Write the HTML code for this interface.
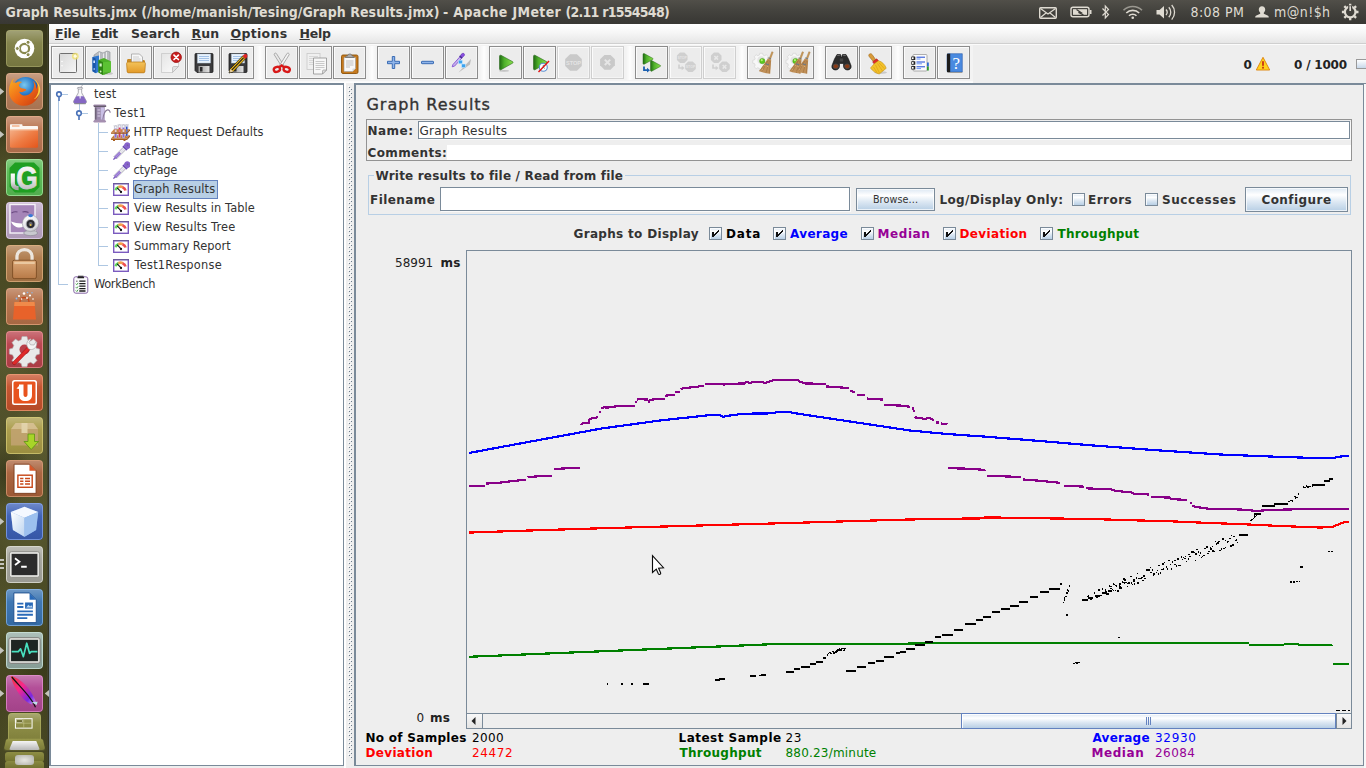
<!DOCTYPE html>
<html lang="en">
<head>
<meta charset="utf-8">
<title>Graph Results.jmx - Apache JMeter</title>
<style>
*{box-sizing:border-box;margin:0;padding:0}
html,body{width:1366px;height:768px;overflow:hidden;background:#eeeeee}
body{position:relative;font-family:"DejaVu Sans","Liberation Sans",sans-serif;font-size:12px;color:#333;line-height:14px}
.abs{position:absolute}
.t{position:absolute;white-space:nowrap;line-height:14px;height:14px}
.b{font-weight:bold;letter-spacing:.2px}
/* top panel */
#panel{position:absolute;left:0;top:0;width:1366px;height:24px;background:linear-gradient(#514f49,#45443f 40%,#3b3a36 85%,#393834)}
#title{position:absolute;left:5.5px;top:3px;font-family:"DejaVu Sans Condensed","DejaVu Sans","Liberation Sans",sans-serif;font-stretch:condensed;font-weight:bold;font-size:14px;line-height:18px;color:#dfdbd2;white-space:nowrap;letter-spacing:-.03px}
.pt{position:absolute;top:3px;font-family:"DejaVu Sans Condensed","DejaVu Sans","Liberation Sans",sans-serif;font-stretch:condensed;font-size:14px;line-height:18px;color:#dfdbd2;white-space:nowrap}
/* launcher */
#launcher{position:absolute;left:0;top:24px;width:49px;height:744px;background:#38381f;overflow:hidden}
.tile{position:absolute;left:6px;width:37px;height:37px;border-radius:4px;overflow:hidden}
/* app */
#menubar{position:absolute;left:49px;top:24px;width:1317px;height:20px;background:linear-gradient(#ffffff,#f6f6f6 45%,#e6e6e6);border-bottom:1px solid #cfcfcf}
.mi{position:absolute;top:3px;font-weight:bold;font-size:12.5px;line-height:15px;color:#333;white-space:nowrap}
.mu::first-letter{text-decoration:underline;text-underline-offset:1px}
#toolbar{position:absolute;left:49px;top:44px;width:1317px;height:39px;background:linear-gradient(#fbfbfb,#fbfbfb 1px,transparent 1px),linear-gradient(90deg,#f3f3f3 924px,#eeeeee 924px)}
.tb{position:absolute;top:46px;width:33px;height:33px;border:1px solid #8c8c8c;background:#ececec;box-shadow:inset 1px 1px 0 #fbfbfb,inset -1px -1px 0 #f4f4f4}
.tb svg{position:absolute;left:0;top:0}
/* tree */
#tree{position:absolute;left:49px;top:83px;width:295px;height:683px;border:2px solid #7a8a99;border-right-width:1px;border-bottom-width:1px;background:#fff}
.tr{position:absolute;white-space:nowrap;line-height:14px;height:14px;font-size:11.4px;color:#333}
/* right panel */
#right{position:absolute;left:354px;top:83px;width:1010px;height:683px;border:2px solid #7a8a99;border-right-width:1px;border-bottom-width:1px;background:#eeeeee}
input{font-family:inherit}
.cb{position:absolute;width:13px;height:13px;border:1px solid #7a8a99;background:linear-gradient(#dde8f3 0%,#ffffff 30%,#dde8f3 60%,#b8cfe5 100%);box-shadow:inset 1px 1px 0 rgba(255,255,255,.8)}
.cb svg{position:absolute;left:0;top:0}
.btn{border:1px solid #7a8a99;background:linear-gradient(#dde8f3 0%,#ffffff 30%,#dde8f3 60%,#b8cfe5 100%);display:flex;align-items:center;justify-content:center;color:#333;box-shadow:inset 0 0 0 1px rgba(255,255,255,.7)}
</style>
</head>
<body>
<div id="panel">
<div id="title"><span style="letter-spacing:.06px">Graph Results.jmx (/home/manish/Tesing/Graph Results.jmx) </span><span id="title1" style="position:absolute;left:437.5px;top:0;letter-spacing:.36px">- Apache JMeter </span><span id="title2" style="position:absolute;left:560px;top:0;letter-spacing:-.74px">(2.11 r1554548)</span></div>
<svg class="abs" style="left:1036px;top:2px" width="330" height="20" viewBox="1036 2 330 20" fill="none" stroke="#dfdbd2">
<rect x="1039.700" y="7.700" width="16.600" height="10.600" rx="1" stroke-width="1.400"/>
<path d="M1040.500 8.500l7.500 5.500 7.500-5.500M1040.500 17.500l5.500-4.500M1055.500 17.500l-5.500-4.500" stroke-width="1.200"/>
<rect x="1071" y="7.200" width="18" height="9.600" rx="2" stroke-width="1.400"/><rect x="1089.700" y="10" width="1.800" height="4" fill="#dfdbd2" stroke="none"/>
<rect x="1073" y="9.200" width="14" height="5.600" fill="#dfdbd2" stroke="none"/>
<path d="M1076.500 9.500l4.500 3h-2.500l5 2.500" stroke="#3c3b37" stroke-width="1.300"/>
<path d="M1102.500 8.500l6 6-3.200 3.500v-12l3.200 3.500-6 6" stroke-width="1.200"/>
<path d="M1123.500 10.300c5-5 13.500-5 18.500 0" stroke-width="1.600" opacity=".55"/>
<path d="M1126.300 13c3.500-3.500 9.400-3.500 12.900 0" stroke-width="1.600"/>
<path d="M1129 15.700c2-2 5.500-2 7.500 0" stroke-width="1.600"/>
<circle cx="1132.750" cy="17.700" r="1.300" fill="#dfdbd2" stroke="none"/>
<path d="M1156.500 10h3l4.500-4v12.500l-4.500-4h-3z" fill="#dfdbd2" stroke="none"/>
<path d="M1166 9.500c1.400 1.600 1.400 4 0 5.600" stroke-width="1.300"/><path d="M1168.800 7.300c2.600 2.800 2.600 7.200 0 10" stroke-width="1.300"/><path d="M1171.700 5c3.800 4 3.800 10.500 0 14.600" stroke-width="1.300"/>
<path d="M1262 6.200c2 0 3.200 1.500 3.200 3.400 0 1.300-.6 2.500-1.400 3.200v1l3.800 1.600c.8.400 1.200 1 1.200 2.100h-13.600c0-1.100.4-1.700 1.200-2.100l3.800-1.600v-1c-.8-.7-1.400-1.900-1.400-3.200 0-1.900 1.200-3.400 3.200-3.400z" fill="#dfdbd2" stroke="none"/>
<g transform="translate(1350.200 12)"><circle r="5.300" stroke-width="2.200"/><g stroke-width="2.300"><path d="M0-8.300v2.500M0 8.300v-2.500M-8.300 0h2.500M8.300 0h-2.500M-5.900-5.900l1.800 1.800M5.900 5.900l-1.800-1.800M-5.900 5.900l1.800-1.800M5.900-5.900l-1.800 1.800"/></g><path d="M0-6.500v5" stroke="#3c3b37" stroke-width="4"/><path d="M0-5.800v4.800" stroke-width="1.700"/></g>
</svg>
<div class="pt" id="clock" style="left:1190.5px;letter-spacing:.42px">8:08 PM</div>
<div class="pt" id="user" style="left:1274px;letter-spacing:.44px">m@n!$h</div>
</div>

<div id="launcher">
<div class="abs" style="left:0;top:0;width:49px;height:744px;background:radial-gradient(ellipse 30px 40px at 8px 150px,rgba(96,96,52,.55),transparent),radial-gradient(ellipse 26px 50px at 44px 250px,rgba(40,40,18,.5),transparent),radial-gradient(ellipse 34px 46px at 6px 330px,rgba(100,100,54,.5),transparent),radial-gradient(ellipse 30px 40px at 40px 410px,rgba(104,104,58,.6),transparent),radial-gradient(ellipse 24px 34px at 6px 450px,rgba(44,44,20,.55),transparent),radial-gradient(ellipse 34px 50px at 30px 500px,rgba(100,100,56,.5),transparent),radial-gradient(ellipse 30px 40px at 4px 590px,rgba(98,98,52,.5),transparent),radial-gradient(ellipse 30px 40px at 44px 640px,rgba(44,44,20,.5),transparent),radial-gradient(ellipse 36px 50px at 20px 720px,rgba(90,90,44,.5),transparent),linear-gradient(#34341a,#3b3b1d 10%,#474721 28%,#52522b 50%,#4e4e28 70%,#454520 88%,#404020)"></div>
<div class="abs" style="left:47px;top:0;width:2px;height:744px;background:linear-gradient(90deg,#4a4a32,#2a2a18)"></div>
<div class="tile" style="left:6px;top:6px;width:37px;height:37px;background:linear-gradient(rgba(255,255,255,.28),rgba(255,255,255,.04) 35%,rgba(0,0,0,.08)),#7f7f45;box-shadow:inset 0 0 0 1px rgba(170,170,110,.6);"><svg width="37" height="37" viewBox="0 0 37 37" style="position:absolute;left:0;top:0"><circle cx="18.500" cy="18.500" r="9.800" fill="#fff"/><circle cx="18.500" cy="18.500" r="4.600" fill="none" stroke="#8a8a50" stroke-width="2.200"/><g fill="#8a8a50" stroke="#fff" stroke-width="1"><circle cx="11.300" cy="18.500" r="2"/><circle cx="22.100" cy="12.300" r="2"/><circle cx="22.100" cy="24.700" r="2"/></g></svg></div>
<div class="tile" style="left:6px;top:49px;width:37px;height:37px;background:linear-gradient(rgba(255,255,255,.28),rgba(255,255,255,.04) 35%,rgba(0,0,0,.08)),#b47c58;box-shadow:inset 0 0 0 1px rgba(225,175,140,.7);"><svg width="37" height="37" viewBox="0 0 37 37" style="position:absolute;left:0;top:0"><defs><radialGradient id="ffg" cx=".45" cy=".3" r=".7"><stop offset="0" stop-color="#7ac8ee"/><stop offset=".5" stop-color="#2878c8"/><stop offset="1" stop-color="#123a8a"/></radialGradient><linearGradient id="fff" x1="0" y1="0" x2="1" y2="1"><stop offset="0" stop-color="#f8b020"/><stop offset=".5" stop-color="#f06a18"/><stop offset="1" stop-color="#c83a10"/></linearGradient></defs><g transform="translate(18.5 18.5) scale(1.12) translate(-18.5 -18.5)"><circle cx="19.500" cy="17.500" r="12" fill="url(#ffg)"/><path d="M6.500 10c-2.500 5-2.700 11.500.8 16 3.700 4.800 10.500 6.600 16.200 4.200 5.200-2.200 8.600-7.400 8.500-13.200 0-2.600-.8-5.400-2.200-7.400.6 2.600.2 5-.8 6.600.2-2.800-.9-5.600-2.800-7.200 1.500 3.300.9 6.800-.9 9.500-1.700 2.600-5.500 4.300-8.600 3.300-1.500-.5-2.500-1.700-2.900-3 1.300.6 2.900.5 4-.3 1.100-.8 1.900-.6 2.400-1.400-.9-1.500-2.800-1.300-4.200-1.600-1.300-.3-2.300-1.300-2.600-2.500.5-1.400 1.800-2.400 3.100-2.900-1.800-.9-4-.6-5.500.6-.9-.4-2-.4-3 0 .1-1.500.7-2.900 1.700-4-1.700.7-2.800 2.100-3.200 3.300z" fill="url(#fff)"/><path d="M27 7.500c2.800 2.300 4.300 6 4 9.500-.2 3.400-1.800 6.500-4.200 8.500 3.500-1.300 5.800-5.200 5.700-9-.1-3.500-2.500-7.200-5.500-9z" fill="#fbd040"/></g></svg></div>
<div class="tile" style="left:6px;top:92px;width:37px;height:37px;background:linear-gradient(rgba(255,255,255,.28),rgba(255,255,255,.04) 35%,rgba(0,0,0,.08)),#b87450;box-shadow:inset 0 0 0 1px rgba(230,175,140,.7);"><svg width="37" height="37" viewBox="0 0 37 37" style="position:absolute;left:0;top:0"><defs><linearGradient id="flg" x1="0" y1="0" x2="1" y2="1"><stop offset="0" stop-color="#f4b088"/><stop offset=".5" stop-color="#ee7c44"/><stop offset="1" stop-color="#e4561c"/></linearGradient></defs><path d="M4 9.200c0-.6.400-1 1-1h10.500c.6 0 1 .4 1 1v.8h14.500c.6 0 1 .4 1 1v3.500H4z" fill="#fbf6f2"/><path d="M6 10h7.500" stroke="#f0905a" stroke-width="1"/><path d="M4 13.500h28v17c0 .7-.5 1.200-1.200 1.200H5.200c-.7 0-1.200-.5-1.200-1.200z" fill="url(#flg)"/><path d="M4 13.500h28v1H4z" fill="#f8c4a4" opacity=".8"/></svg></div>
<div class="tile" style="left:6px;top:135px;width:37px;height:37px;background:linear-gradient(rgba(255,255,255,.28),rgba(255,255,255,.04) 35%,rgba(0,0,0,.08)),#58bb54;box-shadow:inset 0 0 0 1px rgba(170,235,165,.7);"><svg width="37" height="37" viewBox="0 0 37 37" style="position:absolute;left:0;top:0"><defs><linearGradient id="gsil" x1="0" y1="0" x2="0" y2="1"><stop offset="0" stop-color="#ffffff"/><stop offset=".55" stop-color="#e4e4e4"/><stop offset="1" stop-color="#a8a8a8"/></linearGradient></defs><path d="M9 3.500h19l5.500 5.500v19l-5.500 5.500h-19l-5.500-5.500v-19z" fill="#1f9f22"/><text x="10.300" y="29.600" font-family="Liberation Sans,DejaVu Sans,sans-serif" font-weight="bold" font-size="31" textLength="21.500" lengthAdjust="spacingAndGlyphs" fill="url(#gsil)" stroke="url(#gsil)" stroke-width=".8">G</text><path d="M6.800 14.500v9.500c0 3.300 2 5.200 5.800 5.200" fill="none" stroke="url(#gsil)" stroke-width="4.200"/></svg></div>
<div class="tile" style="left:6px;top:178px;width:37px;height:37px;background:linear-gradient(rgba(255,255,255,.28),rgba(255,255,255,.04) 35%,rgba(0,0,0,.08)),#bca6c6;box-shadow:inset 0 0 0 1px rgba(225,210,235,.8);"><svg width="37" height="37" viewBox="0 0 37 37" style="position:absolute;left:0;top:0"><defs><radialGradient id="wcg" cx=".4" cy=".3" r=".8"><stop offset="0" stop-color="#ffffff"/><stop offset=".7" stop-color="#e2e2e6"/><stop offset="1" stop-color="#9a9aa2"/></radialGradient></defs><rect x="4" y="2.500" width="25" height="28.500" fill="#a585b8" stroke="#f6f2f8" stroke-width="1.400"/><path d="M5.500 11c2-1.200 4-1.500 6-1M16.500 10c2-.7 4-.5 6 .6" stroke="#6a4a80" stroke-width="1.100" fill="none"/><path d="M5 19.500c5 2 10.500 2.300 15.500 1.500-2.500 6-12 6.500-15.500-1.500z" fill="#fff"/><ellipse cx="24.600" cy="31" rx="7" ry="2.600" fill="#c9c9d0" stroke="#8a8a92" stroke-width=".6"/><circle cx="24.600" cy="21.300" r="8.300" fill="url(#wcg)" stroke="#9a9aa4" stroke-width=".6"/><circle cx="24.600" cy="22" r="4.600" fill="#2a2a30" stroke="#c4c4cc" stroke-width="1"/><circle cx="24.600" cy="22" r="2" fill="#6a6a74"/><circle cx="24.600" cy="23" r=".9" fill="#e8c040"/><ellipse cx="24.600" cy="13.600" rx="2.400" ry="1.600" fill="#3a78d8"/></svg></div>
<div class="tile" style="left:6px;top:221px;width:37px;height:37px;background:linear-gradient(rgba(255,255,255,.28),rgba(255,255,255,.04) 35%,rgba(0,0,0,.08)),#ae7a4a;box-shadow:inset 0 0 0 1px rgba(225,180,130,.7);"><svg width="37" height="37" viewBox="0 0 37 37" style="position:absolute;left:0;top:0"><g transform="translate(18.5 18.5) scale(1.08) translate(-18.5 -18.5)"><path d="M11.500 17v-4.500c0-4 2.800-6.800 7-6.800s7 2.800 7 6.800V17" fill="none" stroke="#ece6de" stroke-width="3"/><defs><linearGradient id="lkg" x1="0" y1="0" x2="0" y2="1"><stop offset="0" stop-color="#dca878"/><stop offset="1" stop-color="#b87a48"/></linearGradient></defs><rect x="7.500" y="15.500" width="22" height="17" rx="1.500" fill="url(#lkg)" stroke="#7a4a22" stroke-width=".8"/><rect x="9" y="17" width="19" height="2" fill="#eac8a0"/></g></svg></div>
<div class="tile" style="left:6px;top:264px;width:37px;height:37px;background:linear-gradient(rgba(255,255,255,.28),rgba(255,255,255,.04) 35%,rgba(0,0,0,.08)),#b47048;box-shadow:inset 0 0 0 1px rgba(230,170,130,.7);"><svg width="37" height="37" viewBox="0 0 37 37" style="position:absolute;left:0;top:0"><path d="M8.500 14h20l1.500 17.500h-23z" fill="#e8622a"/><path d="M8.500 14h20l.4 4h-20.800z" fill="#f08a4a"/><path d="M14 14c0-3 1.500-4.500 4.500-4.500S23 11 23 14" fill="none" stroke="#c8481a" stroke-width="1.300"/><g fill="#fff"><circle cx="13" cy="8" r="1.100"/><circle cx="18" cy="5.500" r="1.300"/><circle cx="24" cy="7.500" r="1.100"/><circle cx="21" cy="10" r=".9"/><circle cx="15.500" cy="11" r=".8"/><circle cx="27" cy="11" r=".8"/></g><g fill="#8ab8f0"><circle cx="10.500" cy="10.500" r=".9"/><circle cx="21.500" cy="4.500" r=".8"/><circle cx="26" cy="4.800" r=".7"/></g></svg></div>
<div class="tile" style="left:6px;top:307px;width:37px;height:37px;background:linear-gradient(rgba(255,255,255,.28),rgba(255,255,255,.04) 35%,rgba(0,0,0,.08)),#b8404a;box-shadow:inset 0 0 0 1px rgba(235,150,150,.7);"><svg width="37" height="37" viewBox="0 0 37 37" style="position:absolute;left:0;top:0"><g transform="translate(18.500 18.500)"><path d="M-2.500-13h5l.8 3.200 2.800 1.200 2.900-1.800 3.500 3.500-1.800 2.900 1.200 2.800 3.200.8v5l-3.200.8-1.200 2.800 1.800 2.900-3.500 3.500-2.900-1.800-2.800 1.200-.8 3.200h-5l-.8-3.200-2.800-1.200-2.900 1.800-3.500-3.500 1.800-2.900-1.200-2.800-3.200-.8v-5l3.200-.8 1.200-2.800-1.800-2.900 3.500-3.500 2.900 1.800 2.800-1.200z" fill="#e9e9e9" stroke="#b0b0b0" stroke-width=".6"/><circle r="5" fill="#b8404a"/></g><path d="M7.500 30.500l14-14.500 2.500 2.500-14 14.500c-1 1-3 .8-3.500-.5-.3-.8.200-1.500 1-2z" fill="#e02a2a" stroke="#9a1414" stroke-width=".6"/><path d="M21 15c-.8-3 .5-6 3.500-7.200l.5.500-2 3 1.500 2.500 3.500.2 1.800-3 .7.300c.8 3-.8 6-3.800 7-1.500.4-3 .2-4.200-.5z" fill="#f4f4f4" stroke="#a0a0a0" stroke-width=".6"/></svg></div>
<div class="tile" style="left:6px;top:350px;width:37px;height:37px;background:linear-gradient(rgba(255,255,255,.28),rgba(255,255,255,.04) 35%,rgba(0,0,0,.08)),#c4502a;box-shadow:inset 0 0 0 1px rgba(240,160,120,.7);"><svg width="37" height="37" viewBox="0 0 37 37" style="position:absolute;left:0;top:0"><rect x="6" y="6" width="25" height="25" rx="2.500" fill="#fff"/><rect x="7.500" y="7.500" width="22" height="22" rx="1.500" fill="#e8531e"/><path d="M13 10.500h4.500v10c0 1.500.6 2.500 2 2.500s2-1 2-2.500v-10H26v10.500c0 4-2.500 6-6.500 6s-6.500-2-6.500-6z" fill="#fff"/><path d="M13 12l-2.500 2.500L13 15z" fill="#fff"/></svg></div>
<div class="tile" style="left:6px;top:393px;width:37px;height:37px;background:linear-gradient(rgba(255,255,255,.28),rgba(255,255,255,.04) 35%,rgba(0,0,0,.08)),#a89a46;box-shadow:inset 0 0 0 1px rgba(215,205,120,.7);"><svg width="37" height="37" viewBox="0 0 37 37" style="position:absolute;left:0;top:0"><g opacity=".82"><path d="M5 12l4.500-6h18l4.500 6z" fill="#dcc49a"/><rect x="5" y="12" width="27" height="16.500" fill="#c4a474"/><rect x="15.500" y="6" width="6" height="10" fill="#ecdcbc"/></g><path d="M22 17h6.500v7.500h4l-7.300 8-7.200-8h4z" fill="#a8d428" stroke="#5a9410" stroke-width=".8"/></svg></div>
<div class="tile" style="left:6px;top:436px;width:37px;height:37px;background:linear-gradient(rgba(255,255,255,.28),rgba(255,255,255,.04) 35%,rgba(0,0,0,.08)),#a8603a;box-shadow:inset 0 0 0 1px rgba(220,160,120,.7);"><svg width="37" height="37" viewBox="0 0 37 37" style="position:absolute;left:0;top:0"><g transform="translate(18.5 18.5) scale(1.1) translate(-18.5 -18.5)"><path d="M9 5.500h14l6 6V32H9z" fill="#fff" stroke="#7a3a1a" stroke-width=".8"/><path d="M23 5.500l6 6h-6z" fill="#d8582a"/><rect x="12.500" y="15.500" width="13" height="11" fill="#fff" stroke="#c8481a" stroke-width="1.300"/><path d="M14.500 18.500h3M14.500 21h3M14.500 23.500h3M19 18.500h4.500M19 21h4.500M19 23.500h4.500" stroke="#c8481a" stroke-width="1.200"/></g></svg></div>
<div class="tile" style="left:6px;top:479px;width:37px;height:37px;background:linear-gradient(rgba(255,255,255,.28),rgba(255,255,255,.04) 35%,rgba(0,0,0,.08)),#3a5eb4;box-shadow:inset 0 0 0 1px rgba(140,170,240,.7);"><svg width="37" height="37" viewBox="0 0 37 37" style="position:absolute;left:0;top:0"><defs><linearGradient id="vb1" x1="0" y1="0" x2="1" y2="1"><stop offset="0" stop-color="#fff"/><stop offset="1" stop-color="#bcd4f0"/></linearGradient></defs><g transform="translate(18.5 18.5) scale(1.05) translate(-18.5 -18.5)"><path d="M18.500 4.500l13 5-2 17-11 6.500-11-6.500-2-17z" fill="#8ab0e8"/><path d="M5.500 9.500l13-5 13 5-13 5.500z" fill="#f4f8ff"/><path d="M5.500 9.500l13 5.500v18l-11-6.500z" fill="url(#vb1)"/><path d="M31.500 9.500l-13 5.500v18l11-6.500z" fill="#9cc0ee"/></g></svg></div>
<div class="tile" style="left:6px;top:522px;width:37px;height:37px;background:linear-gradient(rgba(255,255,255,.28),rgba(255,255,255,.04) 35%,rgba(0,0,0,.08)),#a6a69e;box-shadow:inset 0 0 0 1px rgba(220,220,210,.8);"><svg width="37" height="37" viewBox="0 0 37 37" style="position:absolute;left:0;top:0"><g transform="translate(18.5 18.5) scale(1.12) translate(-18.5 -18.5)"><rect x="5" y="7" width="27" height="23" rx="2" fill="#e4e4e0" stroke="#8a8a84" stroke-width=".8"/><rect x="7" y="9" width="23" height="19" fill="#2c2c2c"/><path d="M10 13l4 3-4 3" fill="none" stroke="#fff" stroke-width="1.600"/><path d="M15.500 20.500h5" stroke="#fff" stroke-width="1.600"/></g></svg></div>
<div class="tile" style="left:6px;top:565px;width:37px;height:37px;background:linear-gradient(rgba(255,255,255,.28),rgba(255,255,255,.04) 35%,rgba(0,0,0,.08)),#3872b0;box-shadow:inset 0 0 0 1px rgba(140,185,235,.7);"><svg width="37" height="37" viewBox="0 0 37 37" style="position:absolute;left:0;top:0"><g transform="translate(18.5 18.5) scale(1.12) translate(-18.5 -18.5)"><path d="M9 5.500h14l6 6V32H9z" fill="#fff" stroke="#1a4a8a" stroke-width=".8"/><path d="M23 5.500l6 6h-6z" fill="#2a6ab8"/><rect x="19" y="14" width="7" height="5.500" fill="#2a6ab8"/><path d="M12 15h5.500M12 18h5.500M12 22h14M12 25h14M12 28h9" stroke="#2a6ab8" stroke-width="1.700"/><path d="M20 18.500l2-2.500 1.500 1.500 1-1 1.500 2z" fill="#bcd8f4"/></g></svg></div>
<div class="tile" style="left:6px;top:608px;width:37px;height:37px;background:linear-gradient(rgba(255,255,255,.28),rgba(255,255,255,.04) 35%,rgba(0,0,0,.08)),#92aaa2;box-shadow:inset 0 0 0 1px rgba(200,225,215,.8);"><svg width="37" height="37" viewBox="0 0 37 37" style="position:absolute;left:0;top:0"><g transform="translate(18.5 18.5) scale(1.12) translate(-18.5 -18.5)"><rect x="4.500" y="7" width="28" height="23" rx="2" fill="#dcdcd8" stroke="#7a7a76" stroke-width=".8"/><rect x="6.500" y="9" width="24" height="19" fill="#1e2422"/><path d="M7 19.500h6l2-2.500 2.500 7 3-12 2.500 9 1.500-1.500h5.500" fill="none" stroke="#48e0c0" stroke-width="1.500" stroke-linejoin="round"/></g></svg></div>
<div class="tile" style="left:6px;top:651px;width:37px;height:37px;background:linear-gradient(rgba(255,255,255,.28),rgba(255,255,255,.04) 35%,rgba(0,0,0,.08)),#b04894;box-shadow:inset 0 0 0 1px rgba(230,150,210,.7);"><svg width="37" height="37" viewBox="0 0 37 37" style="position:absolute;left:0;top:0"><defs><linearGradient id="jf" x1="0" y1="0" x2="1" y2="1"><stop offset="0" stop-color="#f03a3a"/><stop offset=".4" stop-color="#f8288a"/><stop offset=".75" stop-color="#7a28e0"/><stop offset="1" stop-color="#d8a0e8"/></linearGradient></defs><g transform="translate(18.5 18.5) scale(1.1) translate(-18.5 -18.5)"><path d="M6 2.500c5 1 11 5 16 11.500 3.500 4.500 6.500 10 7.500 14.500l-3.500-1.500-1 1.500c-3-1-7-4-10.500-8.500C10.500 14.500 7 8 6 2.500z" fill="url(#jf)"/><path d="M7 3.500c4 5 11 12 16 18.500 2.500 3.200 4.500 6.500 5.500 9" fill="none" stroke="#111" stroke-width="1.100"/><path d="M25 26.500l5.500-.5-1 3z" fill="#bfe0ea"/></g></svg></div>
<div class="tile" style="left:8px;top:689px;width:33px;height:28px;background:linear-gradient(rgba(255,255,255,.28),rgba(255,255,255,.04) 35%,rgba(0,0,0,.08)),#8a8a40;box-shadow:inset 0 0 0 1px rgba(180,180,100,.6);border-radius:4px 4px 2px 2px"><svg width="33" height="28" viewBox="0 0 37 37" style="position:absolute;left:0;top:0"><rect x="6.500" y="7.500" width="22" height="12.500" fill="none" stroke="#fff" stroke-width="1.300"/><path d="M17.500 7.500v12.500M6.500 13.500h22" stroke="#c4c48a" stroke-width=".8"/><rect x="8" y="9" width="8" height="3.500" fill="#6a6a30" stroke="#e8e8d0" stroke-width=".7"/></svg></div>
<div class="abs" style="left:5px;top:713px;width:39px;height:14px;background:linear-gradient(#9a9a4c,#7a7a38);border-radius:3px;transform:perspective(60px) rotateX(35deg)"></div>
<div class="abs" style="left:9px;top:717px;width:31px;height:9px;background:linear-gradient(#f4f4f4,#b8b8b8);border-radius:2px;clip-path:polygon(12% 0,88% 0,100% 100%,0 100%)"></div>
<div class="abs" style="left:5px;top:728px;width:39px;height:10px;background:linear-gradient(#8e8e44,#72722f);border-radius:3px"></div>
<div class="abs" style="left:5px;top:737px;width:39px;height:9px;background:linear-gradient(#8a8a42,#6c6c2c);border-radius:3px 3px 0 0"></div>
<div class="abs" style="left:15px;top:731px;width:19px;height:10px;background:radial-gradient(ellipse at center,#f4f4f4,#b4b4b4);border-radius:3px;opacity:.9"></div>
<svg class="abs" style="left:0;top:63px" width="6" height="9" viewBox="0 0 6 9"><path d="M0 1v7l4.200-3.500z" fill="#c4c4bc"/></svg>
<svg class="abs" style="left:0;top:106px" width="6" height="9" viewBox="0 0 6 9"><path d="M0 1v7l4.200-3.500z" fill="#c4c4bc"/></svg>
<svg class="abs" style="left:0;top:493px" width="6" height="9" viewBox="0 0 6 9"><path d="M0 1v7l4.200-3.500z" fill="#c4c4bc"/></svg>
<svg class="abs" style="left:0;top:622px" width="6" height="9" viewBox="0 0 6 9"><path d="M0 1v7l4.200-3.500z" fill="#c4c4bc"/></svg>
<svg class="abs" style="left:0;top:665px" width="6" height="9" viewBox="0 0 6 9"><path d="M0 1v7l4.200-3.500z" fill="#c4c4bc"/></svg>
<svg class="abs" style="left:43px;top:665px" width="6" height="9" viewBox="0 0 6 9"><path d="M6 1v7L1.800 4.500z" fill="#c4c4bc"/></svg>
<div class="abs" style="left:0;top:535px;width:4px;height:2px;background:#c4c4bc;box-shadow:0 4px 0 #c4c4bc,0 8px 0 #c4c4bc"></div>
</div>

<div id="menubar"></div>
<div class="mi mu" id="m0" style="left:55px;top:26px;letter-spacing:-0.15px">File</div>
<div class="mi mu" id="m1" style="left:91.5px;top:26px;letter-spacing:-0.37px">Edit</div>
<div class="mi" id="m2" style="left:131.0px;top:26px;letter-spacing:0.08px">Search</div>
<div class="mi mu" id="m3" style="left:191.5px;top:26px;letter-spacing:0.1px">Run</div>
<div class="mi mu" id="m4" style="left:230.5px;top:26px;letter-spacing:0.32px">Options</div>
<div class="mi mu" id="m5" style="left:299.5px;top:26px;letter-spacing:-0.23px">Help</div>

<div id="toolbar"></div>
<div class="abs" style="left:49px;top:81px;width:924px;height:2px;background:linear-gradient(#f8f8f8,#ffffff)"></div>
<div class="tb" style="left:51px"><svg width="31" height="31" viewBox="1 1 31 31"><defs><linearGradient id="gnew" x1="0" y1="0" x2="1" y2="1"><stop offset="0" stop-color="#d8d8d8"/><stop offset="1" stop-color="#f6f6f6"/></linearGradient></defs><rect x="8.500" y="7.500" width="17" height="19" rx="1" fill="url(#gnew)" stroke="#6f6f6f"/><circle cx="11" cy="15.500" r=".8" fill="#fff"/><circle cx="11" cy="19.800" r=".8" fill="#fff"/><circle cx="24.300" cy="10.200" r="3.400" fill="#f2e26a" opacity=".75"/><circle cx="24.300" cy="10.200" r="1.600" fill="#fffbe0"/></svg></div>
<div class="tb" style="left:85px"><svg width="31" height="31" viewBox="1 1 31 31"><path d="M9 9l5-3.500 4 1.500 4-2 3 1v9H9z" fill="#b9bcc0" stroke="#8c9096" stroke-width=".6"/><path d="M14.500 6.500v8M18.500 7.500v8M21.500 6v8" stroke="#e8eaec" stroke-width="1"/><path d="M7.500 11l6.500-1.500v16l-3 1.800-3.500-2z" fill="#2f78d0"/><path d="M7.500 11l3.200 1.500v14.800l-3.200-2z" fill="#1b57a8"/><rect x="8.300" y="14.500" width="1.700" height="2.500" fill="#cfe2ff"/><circle cx="9.200" cy="23" r=".8" fill="#cfe2ff"/><path d="M13.500 14l5.500-2 7 3.500v10.500l-8 3-4.500-2.500z" fill="#4cb028"/><path d="M13.500 14l4.500 2.300v12.700l-4.500-2.500z" fill="#2f8416"/><path d="M18 16.300l8-.8v10.500l-8 3z" fill="#5cc234"/><rect x="14.500" y="17.500" width="2.200" height="3" fill="#d6f5c8"/><circle cx="15.600" cy="25.500" r=".9" fill="#d6f5c8"/><ellipse cx="23" cy="27.500" rx="5" ry="1.300" fill="#000" opacity=".15"/></svg></div>
<div class="tb" style="left:119px"><svg width="31" height="31" viewBox="1 1 31 31"><defs><linearGradient id="gfo" x1="0" y1="0" x2="0" y2="1"><stop offset="0" stop-color="#f3c35a"/><stop offset="1" stop-color="#e39a28"/></linearGradient></defs><path d="M8 14.500c0-1 .6-1.500 1.500-1.500h3l1 1h11c1 0 1.500.6 1.500 1.500V25c0 1-.6 1.800-1.500 1.800h-15c-1 0-1.500-.8-1.500-1.800z" fill="#c98a26"/><path d="M12.500 8h8l3 3v8h-11z" fill="#f7f7f7" stroke="#9a9a9a" stroke-width=".7"/><path d="M14 11h6M14 13h7.500M14 15h7.500" stroke="#c4c4c4" stroke-width=".8"/><path d="M7.600 17.500c0-.9.600-1.500 1.500-1.500h15.800c.9 0 1.500.6 1.500 1.500l-.5 7.700c-.1 1-.7 1.600-1.600 1.600H9.700c-.9 0-1.500-.6-1.600-1.600z" fill="url(#gfo)" stroke="#b87818" stroke-width=".7"/></svg></div>
<div class="tb" style="left:153px"><svg width="31" height="31" viewBox="1 1 31 31"><defs><linearGradient id="gcl" x1="0" y1="0" x2="1" y2="1"><stop offset="0" stop-color="#e4e4e4"/><stop offset="1" stop-color="#fdfdfd"/></linearGradient></defs><path d="M8.500 7.500h17v13l-6 6h-11z" fill="url(#gcl)" stroke="#c4c4c4" stroke-width=".7"/><path d="M25.500 20.500h-4.500c-1 0-1.500.5-1.500 1.500v4.500z" fill="#e2e2e2" stroke="#b4b4b4" stroke-width=".7"/><circle cx="23.200" cy="11.300" r="5.200" fill="#c81e1e" stroke="#9a1212" stroke-width=".8"/><path d="M21 9.100l4.400 4.400M25.400 9.100l-4.400 4.400" stroke="#fff" stroke-width="1.700" stroke-linecap="round"/></svg></div>
<div class="tb" style="left:187px"><svg width="31" height="31" viewBox="1 1 31 31"><defs><linearGradient id="gfl" x1="0" y1="0" x2="1" y2="0"><stop offset="0" stop-color="#9c9c9c"/><stop offset="1" stop-color="#e2e2e2"/></linearGradient></defs><path d="M8 8.500c0-.6.400-1 1-1h16c.6 0 1 .4 1 1v17c0 .6-.4 1-1 1H10l-2-2z" fill="#3a3a3c" stroke="#1e1e20" stroke-width=".8"/><rect x="10.500" y="8" width="13" height="9" fill="#e8f2fc" stroke="#b9c9da" stroke-width=".5"/><path d="M12 10.500h10M12 12.500h10M12 14.500h10" stroke="#8fb4e0" stroke-width=".8"/><rect x="11.500" y="20" width="11" height="6.500" fill="url(#gfl)"/><rect x="13" y="21" width="2.500" height="4.500" fill="#2a2a2c"/></svg></div>
<div class="tb" style="left:221px"><svg width="31" height="31" viewBox="1 1 31 31"><defs><linearGradient id="gfl2" x1="0" y1="0" x2="1" y2="0"><stop offset="0" stop-color="#9c9c9c"/><stop offset="1" stop-color="#e2e2e2"/></linearGradient></defs><path d="M8 8.500c0-.6.400-1 1-1h16c.6 0 1 .4 1 1v17c0 .6-.4 1-1 1H10l-2-2z" fill="#3a3a3c" stroke="#1e1e20" stroke-width=".8"/><rect x="10.500" y="8" width="13" height="9" fill="#e8f2fc" stroke="#b9c9da" stroke-width=".5"/><path d="M12 10.500h10M12 12.500h10M12 14.500h10" stroke="#8fb4e0" stroke-width=".8"/><rect x="11.500" y="20" width="11" height="6.500" fill="url(#gfl2)"/><rect x="13" y="21" width="2.500" height="4.500" fill="#2a2a2c"/><path d="M8 27l1.400-4.300 12.200-12.700 2.900 2.800-12.300 12.800z" fill="#f0b818" stroke="#2a2206" stroke-width=".8"/><path d="M10.200 24.600l12.300-12.700" stroke="#222" stroke-width="1.300"/><path d="M21.600 10l1.400-1.400c.8-.8 2-.8 2.800 0 .8.800.8 2 0 2.800l-1.300 1.400z" fill="#e02424"/><path d="M8 27l1.400-4.300 2.800 2.900z" fill="#e8cfa0"/><path d="M8 27l.6-1.800 1.200 1.200z" fill="#222"/></svg></div>
<div class="abs" style="left:256px;top:46px;width:8px;height:34px;background:linear-gradient(90deg,rgba(255,255,255,0),rgba(255,255,255,.85) 50%,rgba(255,255,255,0))"></div>
<div class="tb" style="left:265px"><svg width="31" height="31" viewBox="1 1 31 31"><path d="M9.800 7.300c.6-.4 1.300-.2 1.700.4l7.700 12.300-1.900 1.500-7.900-12.500c-.4-.6-.2-1.300.4-1.700z" fill="#e9e9e9" stroke="#8e8e8e" stroke-width=".7"/><path d="M23.600 7.300c-.6-.4-1.300-.2-1.700.4l-7.700 12.300 1.900 1.500 7.900-12.500c.4-.6.200-1.300-.4-1.700z" fill="#f4f4f4" stroke="#8e8e8e" stroke-width=".7"/><ellipse cx="11.900" cy="23.400" rx="3.200" ry="2.400" fill="none" stroke="#d81818" stroke-width="2.300" transform="rotate(-20 11.900 23.400)"/><ellipse cx="21.700" cy="23.400" rx="3.200" ry="2.400" fill="none" stroke="#d81818" stroke-width="2.300" transform="rotate(20 21.700 23.400)"/><path d="M14.200 21.300l2.500-2 2.500 2" fill="none" stroke="#d81818" stroke-width="2.200"/></svg></div>
<div class="tb" style="left:299px"><svg width="31" height="31" viewBox="1 1 31 31"><rect x="8" y="7.500" width="13" height="16" fill="#f0f0f0" stroke="#c9c9c9" stroke-width=".8"/><path d="M10 10.500h9M10 12.500h9M10 14.500h9M10 16.500h9M10 18.500h5" stroke="#d2d2d2" stroke-width=".8"/><path d="M14.500 12h13v12l-4 4h-9z" fill="#f7f7f7" stroke="#8f8f8f" stroke-width=".8"/><path d="M27.500 24h-3c-.6 0-1 .4-1 1v3z" fill="#dedede" stroke="#8f8f8f" stroke-width=".6"/><path d="M16.500 15.500h9M16.500 17.500h9M16.500 19.500h9M16.500 21.500h9M16.500 23.500h5" stroke="#bdbdbd" stroke-width=".8"/></svg></div>
<div class="tb" style="left:333px"><svg width="31" height="31" viewBox="1 1 31 31"><rect x="8.500" y="9" width="16.500" height="18.500" rx="1.500" fill="#c67a1e" stroke="#8d5208" stroke-width=".9"/><path d="M11 11.500h11.500v11l-3 3H11z" fill="#f8f8f8" stroke="#9d9d9d" stroke-width=".6"/><path d="M22.500 22.500h-2.200c-.5 0-.8.300-.8.800v2.200z" fill="#d9d9d9"/><path d="M13 15h7.500M13 17h7.500M13 19h7.500M13 21h4" stroke="#b1b1b1" stroke-width=".8"/><path d="M12.500 11.500c0-1 .5-1.500 1.200-1.500h.8c.2-1.200 1-2 2.300-2s2.100.8 2.300 2h.8c.7 0 1.200.5 1.200 1.500z" fill="#a9a9a9" stroke="#6a6a6a" stroke-width=".7"/></svg></div>
<div class="abs" style="left:368px;top:46px;width:8px;height:34px;background:linear-gradient(90deg,rgba(255,255,255,0),rgba(255,255,255,.85) 50%,rgba(255,255,255,0))"></div>
<div class="tb" style="left:377px"><svg width="31" height="31" viewBox="1 1 31 31"><path d="M15.300 10.500h2.400v4.800h4.800v2.400h-4.800v4.800h-2.400v-4.800h-4.800v-2.400h4.800z" fill="#8fb4ea" stroke="#3a6cb4" stroke-width="1" stroke-linejoin="round"/></svg></div>
<div class="tb" style="left:411px"><svg width="31" height="31" viewBox="1 1 31 31"><rect x="10.500" y="15.300" width="12" height="2.400" rx=".5" fill="#8fb4ea" stroke="#3a6cb4" stroke-width="1"/></svg></div>
<div class="tb" style="left:445px"><svg width="31" height="31" viewBox="1 1 31 31"><path d="M13.500 26.500l12.500-13.500-1 5.500z" fill="#b5b5b5" opacity=".9"/><path d="M7.200 20.800l.7-2.200 7-7.800 1.700 1.500-7 7.800z" fill="#c7b3ec" stroke="#7a44d0" stroke-width=".8"/><path d="M14.600 9.800l2.600 2.400" stroke="#4a2a98" stroke-width="1.600"/><path d="M15.600 9.500c.7-1.800 2.300-2.800 3.500-1.800 1.100 1-.1 2.800-1.900 3.600z" fill="#8a4ee0" stroke="#5a2eb0" stroke-width=".6"/><rect x="13.700" y="14.200" width="3.600" height="3.600" fill="#3aa2ee" stroke="#bfe4ff" stroke-width=".6"/><rect x="16.700" y="18" width="3.600" height="3.600" fill="#3aa2ee" stroke="#bfe4ff" stroke-width=".6"/></svg></div>
<div class="abs" style="left:480px;top:46px;width:8px;height:34px;background:linear-gradient(90deg,rgba(255,255,255,0),rgba(255,255,255,.85) 50%,rgba(255,255,255,0))"></div>
<div class="tb" style="left:489px"><svg width="31" height="31" viewBox="1 1 31 31"><defs><linearGradient id="gp1" x1="0" y1="0" x2="1" y2="0"><stop offset="0" stop-color="#1f6a12"/><stop offset=".35" stop-color="#4db02a"/><stop offset="1" stop-color="#8adf4e"/></linearGradient></defs><path d="M10.500 10.200c0-.9.700-1.300 1.500-.9l11.500 6.300c.8.400.8 1.200 0 1.600L12 23.700c-.8.400-1.500 0-1.500-.9z" fill="url(#gp1)" stroke="#2b6a1e" stroke-width=".6"/><ellipse cx="15" cy="24.800" rx="5" ry=".9" fill="#000" opacity=".18"/></svg></div>
<div class="tb" style="left:523px"><svg width="31" height="31" viewBox="1 1 31 31"><defs><linearGradient id="gp2" x1="0" y1="0" x2="1" y2="0"><stop offset="0" stop-color="#1f6a12"/><stop offset=".35" stop-color="#4db02a"/><stop offset="1" stop-color="#8adf4e"/></linearGradient></defs><path d="M10.500 10.200c0-.9.700-1.300 1.500-.9l11.500 6.300c.8.400.8 1.200 0 1.600L12 23.700c-.8.400-1.500 0-1.500-.9z" fill="url(#gp2)" stroke="#2b6a1e" stroke-width=".6"/><circle cx="20.300" cy="21.300" r="4" fill="#fff" stroke="#5b8fd2" stroke-width="1.100"/><path d="M20.300 18.800v2.600l1.500 1" stroke="#2a9a8a" stroke-width=".9" fill="none"/><path d="M15.500 26l10.500-11" stroke="#e01818" stroke-width="1.500"/></svg></div>
<div class="tb" style="left:557px;border-color:#cfcfcf"><svg width="31" height="31" viewBox="1 1 31 31"><path d="M13.06 8.20h6.88l4.86 4.86v6.88l-4.86 4.86h-6.88l-4.86 -4.86v-6.88z" fill="#c9c9c9"/><text x="16.500" y="18.700" font-family="Liberation Sans,sans-serif" font-weight="bold" font-size="5.600" text-anchor="middle" fill="#e4e4e4">STOP</text></svg></div>
<div class="tb" style="left:591px;border-color:#cfcfcf"><svg width="31" height="31" viewBox="1 1 31 31"><path d="M13.43 8.90h6.13l4.33 4.33v6.13l-4.33 4.33h-6.13l-4.33 -4.33v-6.13z" fill="#c9c9c9"/><path d="M13.800 13.600l5.400 5.400M19.200 13.600l-5.400 5.400" stroke="#e6e6e6" stroke-width="2"/></svg></div>
<div class="abs" style="left:626px;top:46px;width:8px;height:34px;background:linear-gradient(90deg,rgba(255,255,255,0),rgba(255,255,255,.85) 50%,rgba(255,255,255,0))"></div>
<div class="tb" style="left:635px"><svg width="31" height="31" viewBox="1 1 31 31"><defs><linearGradient id="gp3" x1="0" y1="0" x2="1" y2="0"><stop offset="0" stop-color="#1f6a12"/><stop offset=".35" stop-color="#4db02a"/><stop offset="1" stop-color="#8adf4e"/></linearGradient></defs><path d="M8 8.300c0-.7.600-1 1.200-.7l8.500 4.700c.6.300.6.900 0 1.200l-8.500 4.700c-.6.300-1.200 0-1.200-.7z" fill="url(#gp3)" stroke="#2b6a1e" stroke-width=".5"/><path d="M15.500 15.300c0-.7.600-1 1.200-.7l8.500 4.700c.6.300.6.900 0 1.200l-8.500 4.700c-.6.300-1.200 0-1.200-.7z" fill="url(#gp3)" stroke="#2b6a1e" stroke-width=".5"/><path d="M9 20.500v3.700h3.500" fill="none" stroke="#1a5fb0" stroke-width="1.800"/><path d="M12 21.800l3 2.400-3 2.400z" fill="#1a5fb0"/></svg></div>
<div class="tb" style="left:669px;border-color:#cfcfcf"><svg width="31" height="31" viewBox="1 1 31 31"><path d="M11.00 6.50h4.39l3.10 3.10v4.39l-3.10 3.10h-4.39l-3.10 -3.10v-4.39z" fill="#cfcfcf"/><path d="M19.30 15.50h4.39l3.10 3.10v4.39l-3.10 3.10h-4.39l-3.10 -3.10v-4.39z" fill="#cfcfcf"/><text x="13.200" y="13" font-family="Liberation Sans,sans-serif" font-weight="bold" font-size="3.500" text-anchor="middle" fill="#e6e6e6">STOP</text><text x="21.500" y="22" font-family="Liberation Sans,sans-serif" font-weight="bold" font-size="3.500" text-anchor="middle" fill="#e6e6e6">STOP</text><path d="M10 18.500v3.500h3" fill="none" stroke="#cfcfcf" stroke-width="1.600"/><path d="M12.700 19.800l2.800 2.200-2.800 2.200z" fill="#cfcfcf"/></svg></div>
<div class="tb" style="left:703px;border-color:#cfcfcf"><svg width="31" height="31" viewBox="1 1 31 31"><path d="M11.00 6.50h4.39l3.10 3.10v4.39l-3.10 3.10h-4.39l-3.10 -3.10v-4.39z" fill="#cfcfcf"/><path d="M19.30 15.50h4.39l3.10 3.10v4.39l-3.10 3.10h-4.39l-3.10 -3.10v-4.39z" fill="#cfcfcf"/><path d="M11.400 10l3.600 3.600M15 10l-3.600 3.600M19.700 19l3.600 3.600M23.300 19l-3.600 3.600" stroke="#e8e8e8" stroke-width="1.500"/><path d="M10 18.500v3.500h3" fill="none" stroke="#cfcfcf" stroke-width="1.600"/><path d="M12.700 19.800l2.800 2.200-2.800 2.200z" fill="#cfcfcf"/></svg></div>
<div class="abs" style="left:738px;top:46px;width:8px;height:34px;background:linear-gradient(90deg,rgba(255,255,255,0),rgba(255,255,255,.85) 50%,rgba(255,255,255,0))"></div>
<div class="tb" style="left:747px"><svg width="31" height="31" viewBox="1 1 31 31"><g transform="translate(14.2 14) scale(.9)"><path d="M-1.600-7.500h3.200l.5 2 1.700.7 1.800-1.100 2.200 2.200-1.100 1.800.7 1.700 2 .5v3.200l-2 .5-.7 1.700 1.100 1.800-2.200 2.200-1.800-1.100-1.700.7-.5 2h-3.200l-.5-2-1.700-.7-1.800 1.100-2.200-2.200 1.100-1.800-.7-1.700-2-.5v-3.200l2-.5.7-1.700-1.100-1.800 2.200-2.200 1.800 1.100 1.700-.7z" fill="#f7f7f7" stroke="#d4d4d4" stroke-width=".8"/><circle r="4.300" fill="#e4e4e4"/><circle cx="1.200" cy="1.200" r="3" fill="#5cc81e" stroke="#3f9a10" stroke-width=".5"/><circle cx=".6" cy=".2" r="1.200" fill="#b8f07a"/></g><g transform="translate(0 0)"><path d="M24.800 5.700l1.400.5-2.900 7.600-1.400-.5z" fill="#c99a5a" stroke="#a07238" stroke-width=".4"/><path d="M21 12.300l3.200 1.100-1 14.300c-3.800-.3-7.800-1-11.200-2.400z" fill="#c09058"/><path d="M21.500 14l-6.500 11.500M22.500 14.500l-3.500 12.300M23.300 15l-1 12.500M20.500 15l-8 10" stroke="#9a6a38" stroke-width=".5"/><path d="M17.500 19.500l1 .3M20 20.300l1.200.3M15 23.500l.8.3" stroke="#e0b888" stroke-width=".8"/><path d="M18.700 17.900l3.200.9" stroke="#6e7a86" stroke-width="1.100"/><path d="M21.300 11.800l2.600.9" stroke="#6e7a86" stroke-width="1"/></g></svg></div>
<div class="tb" style="left:781px"><svg width="31" height="31" viewBox="1 1 31 31"><g transform="translate(13.4 14) scale(.9)"><path d="M-1.600-7.500h3.200l.5 2 1.700.7 1.800-1.100 2.200 2.200-1.100 1.800.7 1.700 2 .5v3.200l-2 .5-.7 1.700 1.100 1.800-2.200 2.200-1.800-1.100-1.700.7-.5 2h-3.200l-.5-2-1.700-.7-1.800 1.100-2.200-2.200 1.100-1.800-.7-1.700-2-.5v-3.200l2-.5.7-1.700-1.100-1.800 2.200-2.200 1.800 1.100 1.700-.7z" fill="#f7f7f7" stroke="#d4d4d4" stroke-width=".8"/><circle r="4.300" fill="#e4e4e4"/><circle cx="1.200" cy="1.200" r="3" fill="#5cc81e" stroke="#3f9a10" stroke-width=".5"/><circle cx=".6" cy=".2" r="1.200" fill="#b8f07a"/></g><g transform="translate(-3.6 0)"><path d="M24.800 5.700l1.400.5-2.900 7.600-1.400-.5z" fill="#c99a5a" stroke="#a07238" stroke-width=".4"/><path d="M21 12.300l3.200 1.100-1 14.300c-3.800-.3-7.800-1-11.200-2.400z" fill="#c09058"/><path d="M21.500 14l-6.500 11.500M22.500 14.500l-3.500 12.300M23.300 15l-1 12.500M20.500 15l-8 10" stroke="#9a6a38" stroke-width=".5"/><path d="M17.500 19.500l1 .3M20 20.300l1.200.3M15 23.500l.8.3" stroke="#e0b888" stroke-width=".8"/><path d="M18.700 17.900l3.200.9" stroke="#6e7a86" stroke-width="1.100"/><path d="M21.300 11.800l2.600.9" stroke="#6e7a86" stroke-width="1"/></g><g transform="translate(3 0)"><path d="M24.800 5.700l1.400.5-2.900 7.600-1.400-.5z" fill="#c99a5a" stroke="#a07238" stroke-width=".4"/><path d="M21 12.300l3.200 1.100-1 14.300c-3.800-.3-7.800-1-11.200-2.400z" fill="#c09058"/><path d="M21.500 14l-6.500 11.500M22.500 14.500l-3.500 12.300M23.300 15l-1 12.500M20.500 15l-8 10" stroke="#9a6a38" stroke-width=".5"/><path d="M17.500 19.500l1 .3M20 20.300l1.200.3M15 23.500l.8.3" stroke="#e0b888" stroke-width=".8"/><path d="M18.700 17.900l3.200.9" stroke="#6e7a86" stroke-width="1.100"/><path d="M21.300 11.800l2.600.9" stroke="#6e7a86" stroke-width="1"/></g></svg></div>
<div class="abs" style="left:816px;top:46px;width:8px;height:34px;background:linear-gradient(90deg,rgba(255,255,255,0),rgba(255,255,255,.85) 50%,rgba(255,255,255,0))"></div>
<div class="tb" style="left:825px"><svg width="31" height="31" viewBox="1 1 31 31"><path d="M9.500 13l2.500-4.500h3.500l1 3.500h0l1-3.500H21l2.500 4.500 2.500 6.500c.7 2.600-1 4.500-3.500 4.500s-4-1.800-4-4v-2.500h-4V20c0 2.200-1.500 4-4 4S6.300 22.100 7 19.500z" fill="#2b2b2b" stroke="#111" stroke-width=".6"/><ellipse cx="10.800" cy="20.300" rx="2.600" ry="2.300" fill="#8a3a14" stroke="#4a4a4a" stroke-width=".8"/><ellipse cx="22.200" cy="20.300" rx="2.600" ry="2.300" fill="#8a3a14" stroke="#4a4a4a" stroke-width=".8"/><path d="M12.200 9.500h2.600M18.200 9.500h2.600" stroke="#6a6a6a" stroke-width="1"/><rect x="14.800" y="12.500" width="3.400" height="3" fill="#444"/></svg></div>
<div class="tb" style="left:859px"><svg width="31" height="31" viewBox="1 1 31 31"><ellipse cx="21.500" cy="26.500" rx="6.500" ry="1.500" fill="#000" opacity=".15"/><path d="M10.300 8.200c.9-.8 2.200-.6 2.800.3l3.500 5-2.500 1.800-3.800-4.600c-.7-.8-.7-1.900 0-2.500z" fill="#d89a3a" stroke="#a06a18" stroke-width=".6"/><path d="M13.600 15.800l4.200-3 1.600 2-4.200 3.200z" fill="#e02a2a" stroke="#a01010" stroke-width=".5"/><path d="M15 18l4.500-3.300c3.500 1 6.500 3.800 7.700 7.600l-7 5.700c-3-.8-6.800-3-8.700-6z" fill="#f2c22a" stroke="#c48f10" stroke-width=".6"/><path d="M16.500 19l4 8M18.500 17.500l5 7.500M14.500 21l3.500 5.500M20 16.800l5.500 6" stroke="#d89a14" stroke-width=".6"/></svg></div>
<div class="abs" style="left:894px;top:46px;width:8px;height:34px;background:linear-gradient(90deg,rgba(255,255,255,0),rgba(255,255,255,.85) 50%,rgba(255,255,255,0))"></div>
<div class="tb" style="left:903px"><svg width="31" height="31" viewBox="1 1 31 31"><rect x="10" y="8.500" width="14" height="16.500" rx="1" fill="#fbfbfb" stroke="#9a9a9a" stroke-width=".8"/><rect x="24" y="16.500" width="1.800" height="4" fill="#2a6ad0"/><rect x="24" y="20.500" width="1.800" height="4" fill="#2a9a2a"/><g fill="#222"><rect x="8.300" y="10.500" width="4" height="3.400" rx=".5"/><rect x="8.300" y="15.300" width="4" height="3.400" rx=".5"/><rect x="8.300" y="20.100" width="4" height="3.400" rx=".5"/></g><g fill="#fff"><rect x="9" y="11.300" width="1.600" height="1.800"/><rect x="9" y="16.100" width="1.600" height="1.800"/><rect x="9" y="20.900" width="1.600" height="1.800"/></g><path d="M13.500 11.200h8.500M13.500 16h8.500M13.500 20.800h8.500" stroke="#1a48d8" stroke-width="1"/><path d="M13.500 13h4M13.500 17.800h5.500M13.500 22.600h4.500" stroke="#5a8af0" stroke-width=".9"/></svg></div>
<div class="tb" style="left:937px"><svg width="31" height="31" viewBox="1 1 31 31"><path d="M10 9c0-.8.500-1.300 1.300-1.300h14V26h-14c-.8 0-1.300-.5-1.300-1.300z" fill="#4a8ae0" stroke="#2a5aa8" stroke-width=".6"/><rect x="10" y="7.700" width="3.200" height="18.300" fill="#1c1c1c"/><path d="M10.500 26.500h14.800" stroke="#9a9a9a" stroke-width="1"/><text x="19.300" y="22.800" font-family="Liberation Serif,DejaVu Serif,serif" font-size="17" text-anchor="middle" fill="#fff">?</text></svg></div>
<div class="t b" id="st_err" style="left:1243.500px;top:58px;color:#222">0</div>
<svg class="abs" style="left:1255px;top:56px" width="16" height="16" viewBox="0 0 16 16"><path d="M8 1.300L14.700 14H1.300z" fill="#ffd21e" stroke="#e08a14" stroke-width="1" stroke-linejoin="round"/><rect x="7.100" y="5.200" width="1.800" height="4.600" fill="#c83214"/><rect x="7.100" y="10.800" width="1.800" height="1.800" fill="#c83214"/></svg>
<div class="t b" id="st_thr" style="left:1294px;top:58px;color:#222;letter-spacing:-.2px">0 / 1000</div>
<div class="abs" style="left:1356px;top:59px;width:12px;height:10px;border:1px solid #999;background:linear-gradient(#ffffff,#c8d8ea)"></div>

<div id="tree"></div>
<svg class="abs" style="left:51px;top:85px" width="120" height="210" viewBox="51 85 120 210" shape-rendering="crispEdges"><g stroke="#aec7e2" stroke-width="1" fill="none"><path d="M58.500 101V284.500H68"/><path d="M62 94.500h6"/><path d="M79.500 104v6"/><path d="M82 113.500h6"/><path d="M98.500 123V265.500"/><path d="M98.500 132.5h9.500"/><path d="M98.500 151.5h9.500"/><path d="M98.500 170.5h9.500"/><path d="M98.500 189.5h9.500"/><path d="M98.500 208.5h9.500"/><path d="M98.500 227.5h9.500"/><path d="M98.500 246.5h9.500"/><path d="M98.500 265.5h9.500"/></g></svg>
<svg class="abs" style="left:51px;top:85px" width="60" height="60" viewBox="51 85 60 60"><circle cx="59" cy="94.2" r="2.3" fill="#fff" stroke="#4a72b8" stroke-width="1.6"/><rect x="58.2" y="96.8" width="1.6" height="4.2" fill="#4a72b8"/><circle cx="79" cy="113.2" r="2.3" fill="#fff" stroke="#4a72b8" stroke-width="1.6"/><rect x="78.2" y="115.8" width="1.6" height="4.2" fill="#4a72b8"/></svg>
<div class="abs" style="left:133px;top:180px;width:85px;height:19px;background:#b8cfe5;border:1px solid #6382bf"></div>
<div class="abs" style="left:72px;top:85px;line-height:0"><svg width="16" height="20" viewBox="0 0 16 20"><path d="M6.3 3.2h3.4v4.6l4.6 8.2c.6 1.2-.2 2.6-1.6 2.6H3.300c-1.4 0-2.200-1.4-1.600-2.600L6.300 7.800z" fill="#f2f2f4" stroke="#9a9aa2" stroke-width=".8"/><path d="M4.4 11.200h7.200l2.600 4.900c.5 1-.1 2.100-1.300 2.100H3.100c-1.200 0-1.800-1.100-1.300-2.100z" fill="#8567c4"/><rect x="7.600" y="5" width="1" height="8.500" fill="#fff"/><path d="M2.200 18.200h11.600v1H2.200z" fill="#6e6e78" opacity=".7"/><path d="M5.200 2.800h5.600M8.600 2.400l2-2.400" stroke="#b8b8c0" stroke-width="1" fill="none"/><ellipse cx="8" cy="3.200" rx="2.700" ry=".9" fill="#fff" stroke="#8e8e98" stroke-width=".7"/></svg></div>
<div class="tr" id="t0" style="left:94.0px;top:87px;letter-spacing:0.13px">test</div>
<div class="abs" style="left:92px;top:104px;line-height:0"><svg width="19" height="19" viewBox="0 0 19 19"><path d="M1.200 1.800c0-.8 1-1.300 2-1.300h9c1 0 2 .5 2 1.300l-1.700 1.700v12l1.700 1.700c0 .8-1 1.300-2 1.300h-9c-1 0-2-.5-2-1.300l1.700-1.700v-12z" fill="#a58fb0"/><rect x="2.900" y="3.500" width="9.600" height="12" fill="#9c8cae"/><rect x="8.800" y="3.500" width="3.700" height="12" fill="#c9bfe6"/><rect x="2.900" y="3.500" width="1.600" height="12" fill="#6f6478"/><path d="M1.800 2.300h12.400" stroke="#5d5564" stroke-width="1.200"/><path d="M5.500 6h2.800M5.500 9h2.800M5.500 12h2.800" stroke="#d9d0e6" stroke-width="1"/><path d="M10.800 15.500c.6-5 2.300-9 4.700-9.600 1.600-.3 2.500 1.200 2.700 2.900" fill="none" stroke="#8a7a98" stroke-width="1.100"/></svg></div>
<div class="tr" id="t1" style="left:114.0px;top:106px;letter-spacing:0.55px">Test1</div>
<div class="abs" style="left:111px;top:123px;line-height:0"><svg width="20" height="19" viewBox="0 0 20 19"><path d="M0 15.500l3-3.200h16l-3 3.200z" fill="#c87a34"/><path d="M0 15.500h16v1.500H0z" fill="#a85e20"/><path d="M16 15.500l3-3.200v1.500l-3 3.200z" fill="#8e4c16"/><rect x="2" y="17" width="2" height="1" fill="#a85e20"/><rect x="12.500" y="17" width="2" height="1" fill="#a85e20"/><g stroke="#9a9ab0" stroke-width=".5"><rect x="3.400" y="2.800" width="2.600" height="12.200" rx="1" fill="#f6f6fb"/><rect x="7.300" y="1.800" width="2.600" height="13.200" rx="1" fill="#f6f6fb"/><rect x="11.200" y="1.800" width="2.600" height="13.200" rx="1" fill="#f6f6fb"/><rect x="14.600" y="1.800" width="2.300" height="11.500" rx="1" fill="#f6f6fb"/></g><rect x="3.800" y="5.600" width="1.800" height="9" fill="#8a6ad0"/><rect x="7.700" y="4.600" width="1.800" height="10" fill="#d8365a"/><rect x="11.600" y="4.600" width="1.800" height="10" fill="#8a6ad0"/><rect x="15" y="3.600" width="1.500" height="9.300" fill="#2a4cc8"/><path d="M6.500 1.800h11.500M2.500 2.800h4" stroke="#b8b8c4" stroke-width=".6"/><path d="M0 9.500l3-3.200h16l-3 3.200z" fill="#c87a34" opacity=".92"/><path d="M0 9.500h16v1.300H0z" fill="#a85e20"/><path d="M16 9.500l3-3.200v1.300l-3 3.200z" fill="#8e4c16"/><g fill="#e9e4f6" opacity=".85"><rect x="3.800" y="6.500" width="1.800" height="2.600"/><rect x="11.600" y="6.500" width="1.800" height="2.600"/></g><rect x="7.700" y="6.500" width="1.800" height="2.600" fill="#e8708a"/><rect x="15" y="6.500" width="1.500" height="2.300" fill="#5a78e0"/></svg></div>
<div class="tr" id="t2" style="left:133.5px;top:125px;letter-spacing:-0.02px">HTTP Request Defaults</div>
<div class="abs" style="left:111px;top:142px;line-height:0"><svg width="19" height="20" viewBox="0 0 19 20"><g transform="rotate(45 9.500 10.500)"><rect x="7.800" y="4.500" width="3.400" height="13.500" fill="#f2f2f6" stroke="#8a8a96" stroke-width=".6"/><rect x="8.100" y="11" width="2.800" height="7" fill="#8864cc"/><path d="M8.100 12.200h2.800M8.100 13.600h2.800M8.100 15h2.800M8.100 16.400h2.800" stroke="#e6defa" stroke-width=".5"/><path d="M8.100 6h2.800M8.100 7.400h2.800M8.100 8.800h2.800M8.100 10.200h2.800" stroke="#c4c4cc" stroke-width=".5"/><path d="M8.600 18h1.800l-.4 2.600h-1z" fill="#7a58c0"/><rect x="6.600" y="3.200" width="5.800" height="1.800" rx=".5" fill="#6a4ab4"/><path d="M7 3.300c-1.600-2.200-1.200-5.800 2.500-5.800s4.100 3.600 2.500 5.800z" fill="#8864cc"/><rect x="8.700" y="-.2" width="1.600" height="1.200" fill="#6a5a8a" opacity=".7"/></g></svg></div>
<div class="tr" id="t3" style="left:133.5px;top:144px;letter-spacing:-0.07px">catPage</div>
<div class="abs" style="left:111px;top:161px;line-height:0"><svg width="19" height="20" viewBox="0 0 19 20"><g transform="rotate(45 9.500 10.500)"><rect x="7.800" y="4.500" width="3.400" height="13.500" fill="#f2f2f6" stroke="#8a8a96" stroke-width=".6"/><rect x="8.100" y="11" width="2.800" height="7" fill="#8864cc"/><path d="M8.100 12.200h2.800M8.100 13.600h2.800M8.100 15h2.800M8.100 16.400h2.800" stroke="#e6defa" stroke-width=".5"/><path d="M8.100 6h2.800M8.100 7.400h2.800M8.100 8.800h2.800M8.100 10.200h2.800" stroke="#c4c4cc" stroke-width=".5"/><path d="M8.600 18h1.800l-.4 2.600h-1z" fill="#7a58c0"/><rect x="6.600" y="3.200" width="5.800" height="1.800" rx=".5" fill="#6a4ab4"/><path d="M7 3.300c-1.600-2.200-1.200-5.800 2.500-5.800s4.100 3.600 2.500 5.800z" fill="#8864cc"/><rect x="8.700" y="-.2" width="1.600" height="1.200" fill="#6a5a8a" opacity=".7"/></g></svg></div>
<div class="tr" id="t4" style="left:133.5px;top:163px;letter-spacing:-0.22px">ctyPage</div>
<div class="abs" style="left:113px;top:183px;line-height:0"><svg width="16" height="13" viewBox="0 0 16 13"><rect x=".7" y=".7" width="14.600" height="11.600" fill="#fff" stroke="#7b5bbf" stroke-width="1.400"/><path d="M0 .6h16" stroke="#6a5a98" stroke-width="1.200"/><path d="M2.600 7.200c.3-1.600 1.400-2.700 3-3.300" fill="none" stroke="#5fd65c" stroke-width="2.600"/><path d="M5.300 4.100c1.500-.6 3-.6 4.500 0" fill="none" stroke="#f2a04e" stroke-width="2.600"/><path d="M9.500 4.300c1.700.6 2.700 1.700 3 3.300" fill="none" stroke="#f04e4e" stroke-width="2.600"/><path d="M4.200 4.900l3.600 3.800" stroke="#111" stroke-width="1.100"/><circle cx="8" cy="9" r="1.150" fill="#111"/></svg></div>
<div class="tr" id="t5" style="left:134.0px;top:182px;letter-spacing:0.12px">Graph Results</div>
<div class="abs" style="left:113px;top:202px;line-height:0"><svg width="16" height="13" viewBox="0 0 16 13"><rect x=".7" y=".7" width="14.600" height="11.600" fill="#fff" stroke="#7b5bbf" stroke-width="1.400"/><path d="M0 .6h16" stroke="#6a5a98" stroke-width="1.200"/><path d="M2.600 7.200c.3-1.600 1.400-2.700 3-3.300" fill="none" stroke="#5fd65c" stroke-width="2.600"/><path d="M5.300 4.100c1.500-.6 3-.6 4.500 0" fill="none" stroke="#f2a04e" stroke-width="2.600"/><path d="M9.500 4.300c1.700.6 2.700 1.700 3 3.300" fill="none" stroke="#f04e4e" stroke-width="2.600"/><path d="M4.200 4.900l3.600 3.800" stroke="#111" stroke-width="1.100"/><circle cx="8" cy="9" r="1.150" fill="#111"/></svg></div>
<div class="tr" id="t6" style="left:134.0px;top:201px;letter-spacing:0.1px">View Results in Table</div>
<div class="abs" style="left:113px;top:221px;line-height:0"><svg width="16" height="13" viewBox="0 0 16 13"><rect x=".7" y=".7" width="14.600" height="11.600" fill="#fff" stroke="#7b5bbf" stroke-width="1.400"/><path d="M0 .6h16" stroke="#6a5a98" stroke-width="1.200"/><path d="M2.600 7.200c.3-1.600 1.400-2.700 3-3.300" fill="none" stroke="#5fd65c" stroke-width="2.600"/><path d="M5.300 4.100c1.500-.6 3-.6 4.500 0" fill="none" stroke="#f2a04e" stroke-width="2.600"/><path d="M9.500 4.300c1.700.6 2.700 1.700 3 3.300" fill="none" stroke="#f04e4e" stroke-width="2.600"/><path d="M4.200 4.900l3.600 3.800" stroke="#111" stroke-width="1.100"/><circle cx="8" cy="9" r="1.150" fill="#111"/></svg></div>
<div class="tr" id="t7" style="left:134.0px;top:220px;letter-spacing:0.13px">View Results Tree</div>
<div class="abs" style="left:113px;top:240px;line-height:0"><svg width="16" height="13" viewBox="0 0 16 13"><rect x=".7" y=".7" width="14.600" height="11.600" fill="#fff" stroke="#7b5bbf" stroke-width="1.400"/><path d="M0 .6h16" stroke="#6a5a98" stroke-width="1.200"/><path d="M2.600 7.200c.3-1.600 1.400-2.700 3-3.300" fill="none" stroke="#5fd65c" stroke-width="2.600"/><path d="M5.300 4.100c1.500-.6 3-.6 4.500 0" fill="none" stroke="#f2a04e" stroke-width="2.600"/><path d="M9.500 4.300c1.700.6 2.700 1.700 3 3.300" fill="none" stroke="#f04e4e" stroke-width="2.600"/><path d="M4.200 4.900l3.600 3.800" stroke="#111" stroke-width="1.100"/><circle cx="8" cy="9" r="1.150" fill="#111"/></svg></div>
<div class="tr" id="t8" style="left:134.0px;top:239px;letter-spacing:0.02px">Summary Report</div>
<div class="abs" style="left:113px;top:259px;line-height:0"><svg width="16" height="13" viewBox="0 0 16 13"><rect x=".7" y=".7" width="14.600" height="11.600" fill="#fff" stroke="#7b5bbf" stroke-width="1.400"/><path d="M0 .6h16" stroke="#6a5a98" stroke-width="1.200"/><path d="M2.600 7.200c.3-1.600 1.400-2.700 3-3.300" fill="none" stroke="#5fd65c" stroke-width="2.600"/><path d="M5.300 4.100c1.500-.6 3-.6 4.500 0" fill="none" stroke="#f2a04e" stroke-width="2.600"/><path d="M9.500 4.300c1.700.6 2.700 1.700 3 3.300" fill="none" stroke="#f04e4e" stroke-width="2.600"/><path d="M4.200 4.900l3.600 3.800" stroke="#111" stroke-width="1.100"/><circle cx="8" cy="9" r="1.150" fill="#111"/></svg></div>
<div class="tr" id="t9" style="left:134.5px;top:258px;letter-spacing:0.23px">Test1Response</div>
<div class="abs" style="left:73px;top:275px;line-height:0"><svg width="16" height="19" viewBox="0 0 16 19"><rect x=".8" y="1.800" width="14" height="16.400" rx="2" fill="#fbfbfd" stroke="#8464a4" stroke-width="1"/><path d="M5 1.200h5.500M4.500 2.600h6.500" stroke="#222" stroke-width="1.100"/><path d="M6.300 6.200h6.200M6.300 8.700h6.200M6.300 11.200h6.200M6.300 13.700h6.200M6.300 16h6.200" stroke="#1a1a1a" stroke-width="1.300"/><path d="M2.800 8.700l1 1 1.300-1.800M2.800 12.200l1 1 1.300-1.800M2.800 15.500l1 1 1.300-1.800" fill="none" stroke="#3a9a3a" stroke-width=".9"/><path d="M3 6.200h1.600" stroke="#666" stroke-width="1"/></svg></div>
<div class="tr" id="t10" style="left:94.0px;top:277px;letter-spacing:-0.35px">WorkBench</div>

<div id="right"></div>
<div class="abs" style="left:1364px;top:83px;width:2px;height:685px;background:linear-gradient(#7a8a99 1px,#f8f8f8 1px)"></div>
<div class="abs" id="divider" style="left:344px;top:83px;width:10px;height:685px;background:linear-gradient(90deg,#ffffff 2px,#eeeeee 2px)"></div>
<svg class="abs" style="left:348px;top:86px" width="4" height="672" shape-rendering="crispEdges"><defs><pattern id="bump" width="4" height="4" patternUnits="userSpaceOnUse"><rect x="0" y="0" width="1" height="1" fill="#fff"/><rect x="2" y="2" width="1" height="1" fill="#fff"/><rect x="1" y="1" width="1" height="1" fill="#6b7b8b"/><rect x="3" y="3" width="1" height="1" fill="#6b7b8b"/></pattern></defs><rect width="4" height="672" fill="url(#bump)"/></svg>
<div class="t" id="gtitle" style="left:366.500px;top:95px;font-size:16px;letter-spacing:.95px;-webkit-text-stroke:.35px #333;line-height:20px;height:20px;color:#333">Graph Results</div>
<div class="abs" style="left:366px;top:119px;width:986px;height:42px;border:1px solid #939393"></div>
<div class="t b" id="l_name" style="left:367.5px;letter-spacing:0.47px;top:124px">Name:</div>
<div class="abs" style="left:418px;top:121px;width:932px;height:18px;background:#fff;border:1px solid #7a8a99;box-shadow:1px 1px 0 #fafafa"></div>
<div class="t" id="v_name" style="left:419.5px;letter-spacing:0.28px;top:124px;font-size:12px;letter-spacing:.3px">Graph Results</div>
<div class="t b" id="l_comments" style="left:367.5px;letter-spacing:0.36px;top:146px">Comments:</div>
<div class="abs" style="left:447px;top:145px;width:904px;height:15px;background:#fff"></div>
<div class="abs" style="left:368px;top:175px;width:983px;height:40px;border:1px solid #b8cfe5"></div>
<div class="t b" id="l_write" style="left:373.5px;letter-spacing:0.19px;top:169px;padding:0 2px;background:#eeeeee">Write results to file / Read from file</div>
<div class="t b" id="l_filename" style="left:370.0px;letter-spacing:0.44px;top:193px">Filename</div>
<div class="abs" style="left:440px;top:187px;width:410px;height:24px;background:#fff;border:1px solid #7a8a99;box-shadow:1px 1px 0 #fafafa"></div>
<div class="abs btn" id="browse" style="left:856px;top:188px;width:79px;height:23px"><span style="font-size:9.600px;letter-spacing:.12px;position:relative;top:0px">Browse...</span></div>
<div class="t b" id="l_log" style="left:939.5px;letter-spacing:0.34px;top:193px">Log/Display Only:</div>
<div class="cb" style="left:1072px;top:193px"></div>
<div class="t b" id="l_err" style="left:1088.0px;letter-spacing:0.48px;top:193px">Errors</div>
<div class="cb" style="left:1145px;top:193px"></div>
<div class="t b" id="l_succ" style="left:1162.0px;letter-spacing:0.59px;top:193px">Successes</div>
<div class="abs btn" id="configure" style="left:1245px;top:187px;width:103px;height:25px"><span class="b" style="font-size:12px;letter-spacing:.45px">Configure</span></div>
<div class="t b" id="l_gtd" style="left:573.5px;letter-spacing:0.32px;top:227px">Graphs to Display</div>
<div class="cb" style="left:709px;top:227px"><svg width="13" height="13" viewBox="0 0 13 13" shape-rendering="crispEdges" style="left:-1px;top:-1px"><rect x="3" y="5" width="2" height="5" fill="#111"/><rect x="9" y="3" width="1" height="2" fill="#111"/><rect x="8" y="4" width="1" height="2" fill="#111"/><rect x="7" y="5" width="1" height="2" fill="#111"/><rect x="6" y="6" width="1" height="2" fill="#111"/><rect x="5" y="7" width="1" height="2" fill="#111"/></svg></div>
<div class="t b" id="c_data" style="left:726.0px;letter-spacing:0.83px;top:227px;color:#000">Data</div>
<div class="cb" style="left:773px;top:227px"><svg width="13" height="13" viewBox="0 0 13 13" shape-rendering="crispEdges" style="left:-1px;top:-1px"><rect x="3" y="5" width="2" height="5" fill="#111"/><rect x="9" y="3" width="1" height="2" fill="#111"/><rect x="8" y="4" width="1" height="2" fill="#111"/><rect x="7" y="5" width="1" height="2" fill="#111"/><rect x="6" y="6" width="1" height="2" fill="#111"/><rect x="5" y="7" width="1" height="2" fill="#111"/></svg></div>
<div class="t b" id="c_avg" style="left:790.0px;letter-spacing:0.35px;top:227px;color:#0000ff">Average</div>
<div class="cb" style="left:861px;top:227px"><svg width="13" height="13" viewBox="0 0 13 13" shape-rendering="crispEdges" style="left:-1px;top:-1px"><rect x="3" y="5" width="2" height="5" fill="#111"/><rect x="9" y="3" width="1" height="2" fill="#111"/><rect x="8" y="4" width="1" height="2" fill="#111"/><rect x="7" y="5" width="1" height="2" fill="#111"/><rect x="6" y="6" width="1" height="2" fill="#111"/><rect x="5" y="7" width="1" height="2" fill="#111"/></svg></div>
<div class="t b" id="c_med" style="left:877.5px;letter-spacing:0.58px;top:227px;color:#960096">Median</div>
<div class="cb" style="left:943px;top:227px"><svg width="13" height="13" viewBox="0 0 13 13" shape-rendering="crispEdges" style="left:-1px;top:-1px"><rect x="3" y="5" width="2" height="5" fill="#111"/><rect x="9" y="3" width="1" height="2" fill="#111"/><rect x="8" y="4" width="1" height="2" fill="#111"/><rect x="7" y="5" width="1" height="2" fill="#111"/><rect x="6" y="6" width="1" height="2" fill="#111"/><rect x="5" y="7" width="1" height="2" fill="#111"/></svg></div>
<div class="t b" id="c_dev" style="left:959.5px;letter-spacing:0.36px;top:227px;color:#ff0000">Deviation</div>
<div class="cb" style="left:1040px;top:227px"><svg width="13" height="13" viewBox="0 0 13 13" shape-rendering="crispEdges" style="left:-1px;top:-1px"><rect x="3" y="5" width="2" height="5" fill="#111"/><rect x="9" y="3" width="1" height="2" fill="#111"/><rect x="8" y="4" width="1" height="2" fill="#111"/><rect x="7" y="5" width="1" height="2" fill="#111"/><rect x="6" y="6" width="1" height="2" fill="#111"/><rect x="5" y="7" width="1" height="2" fill="#111"/></svg></div>
<div class="t b" id="c_thr" style="left:1057.5px;letter-spacing:0.24px;top:227px;color:#008000">Throughput</div>
<div class="t b" id="s1" style="left:365.5px;letter-spacing:0.29px;top:731px;color:#000">No of Samples</div>
<div class="t" id="s2" style="left:472.0px;letter-spacing:0.4px;top:731px;color:#000">2000</div>
<div class="t b" id="s3" style="left:365.5px;letter-spacing:0.33px;top:746px;color:#ff0000">Deviation</div>
<div class="t" id="s4" style="left:472.0px;letter-spacing:0.6px;top:746px;color:#ff0000">24472</div>
<div class="t b" id="s5" style="left:678.5px;letter-spacing:0.49px;top:731px;color:#000">Latest Sample</div>
<div class="t" id="s6" style="left:785.5px;letter-spacing:0.6px;top:731px;color:#000">23</div>
<div class="t b" id="s7" style="left:679.5px;letter-spacing:0.28px;top:746px;color:#008000">Throughput</div>
<div class="t" id="s8" style="left:785.5px;letter-spacing:0.2px;top:746px;color:#008000">880.23/minute</div>
<div class="t b" id="s9" style="left:1092.5px;letter-spacing:0.25px;top:731px;color:#0000ff">Average</div>
<div class="t" id="s10" style="left:1155.0px;letter-spacing:0.7px;top:731px;color:#0000ff">32930</div>
<div class="t b" id="s11" style="left:1091.5px;letter-spacing:0.56px;top:746px;color:#960096">Median</div>
<div class="t" id="s12" style="left:1155.0px;letter-spacing:0.45px;top:746px;color:#960096">26084</div>
<div class="t" id="ymax" style="left:395px;top:256px;color:#222">58991</div>
<div class="t b" id="ymax_ms" style="left:440.500px;top:256px;color:#222">ms</div>
<div class="t" id="ymin" style="left:416.500px;top:711px;color:#222">0</div>
<div class="t b" id="ymin_ms" style="left:430px;top:711px;color:#222">ms</div>

<div class="abs" id="chartbox" style="left:466px;top:250px;width:886px;height:479px;border:1px solid #7a8a99;background:#eeeeee"></div>
<svg class="abs" id="chart" style="left:467px;top:251px" width="884" height="462" viewBox="467 251 884 462" shape-rendering="crispEdges"><polyline points="469.0,453.0 520.0,443.5 601.6,428.5 660.0,420.5 713.6,414.7 718.0,414.7 723.5,416.7 730.0,415.5 743.3,413.7 769.6,413.4 780.0,411.8 787.0,411.8 800.0,414.0 850.0,421.5 910.0,430.5 947.0,434.0 982.0,436.4 1040.0,441.0 1091.0,445.3 1160.0,450.5 1220.7,454.5 1270.0,456.5 1302.6,457.6 1333.3,457.9 1340.0,456.6 1349.0,455.9" fill="none" stroke="#0000ff" stroke-width="2.2"/><polyline points="469.0,532.6 520.0,530.8 600.0,528.3 700.0,525.5 800.0,522.7 900.0,519.7 945.0,518.8 981.0,518.4 984.0,517.6 1000.0,517.5 1003.0,518.0 1022.8,518.0 1091.0,519.0 1130.0,520.2 1173.0,521.4 1210.0,523.0 1241.0,524.1 1280.0,526.0 1319.7,527.5 1331.6,527.2 1337.0,525.0 1343.5,522.4 1349.0,521.7" fill="none" stroke="#ff0000" stroke-width="2.2"/><polyline points="469.0,656.8 560.0,653.0 650.0,649.3 723.5,646.3 776.2,644.0 830.0,643.9 900.0,643.8 942.2,642.8 1248.5,642.8" fill="none" stroke="#008000" stroke-width="2.2"/><polyline points="1249.0,645.2 1270.0,645.2 1280.0,644.6 1297.0,644.2 1302.0,645.2 1318.0,644.6 1322.0,645.2 1332.5,644.6" fill="none" stroke="#008000" stroke-width="2"/><polyline points="1333.0,663.9 1349.0,663.9" fill="none" stroke="#008000" stroke-width="2.2"/><polyline points="469.0,485.8 484.7,485.8" fill="none" stroke="#880088" stroke-width="2.2"/><polyline points="486.0,483.6 500.0,482.6 512.0,481.2 525.9,479.6" fill="none" stroke="#880088" stroke-width="2.2"/><polyline points="527.5,477.0 540.0,476.2 552.2,475.6" fill="none" stroke="#880088" stroke-width="2.2"/><polyline points="553.9,469.0 565.0,468.4 580.2,467.8" fill="none" stroke="#880088" stroke-width="2.2"/><polyline points="581.0,425.0 583.0,422.8 588.7,422.8 589.2,419.8 591.4,418.5 598.3,417.2" fill="none" stroke="#880088" stroke-width="2.2"/><polyline points="599.3,412.0 601.0,412.0" fill="none" stroke="#880088" stroke-width="2.2"/><polyline points="601.0,408.3 605.5,406.9 606.0,407.6 614.7,407.0 615.0,406.0 634.7,406.0" fill="none" stroke="#880088" stroke-width="2.2"/><polyline points="635.0,401.9 636.5,401.9" fill="none" stroke="#880088" stroke-width="2.2"/><polyline points="637.3,399.5 642.0,398.7 645.0,399.5 648.0,399.6" fill="none" stroke="#880088" stroke-width="2.2"/><polyline points="648.4,401.5 649.9,401.5" fill="none" stroke="#880088" stroke-width="2.2"/><polyline points="649.3,399.9 653.0,399.9 653.4,399.0 664.8,399.0" fill="none" stroke="#880088" stroke-width="2.2"/><polyline points="665.2,396.0 667.0,396.0 667.5,394.8 674.8,394.8" fill="none" stroke="#880088" stroke-width="2.2"/><polyline points="675.3,391.9 680.0,391.9" fill="none" stroke="#880088" stroke-width="2.2"/><polyline points="681.0,389.5 683.0,388.3 690.0,387.5 703.7,385.9" fill="none" stroke="#880088" stroke-width="2.2"/><polyline points="705.4,383.8 723.5,383.8 724.0,384.8 724.5,383.8 744.9,383.5 746.0,382.3 748.0,382.1 750.0,383.5 752.0,382.1 763.0,382.1 765.0,383.0 771.3,381.1 772.9,379.9 797.6,379.9 799.0,381.3 805.8,383.5 825.6,383.8" fill="none" stroke="#880088" stroke-width="2.2"/><polyline points="826.3,386.4 848.7,388.0" fill="none" stroke="#880088" stroke-width="2.2"/><polyline points="850.3,391.0 855.0,392.2" fill="none" stroke="#880088" stroke-width="2.2"/><polyline points="856.9,394.6 865.0,395.4" fill="none" stroke="#880088" stroke-width="2.2"/><polyline points="866.8,398.5 883.2,399.6" fill="none" stroke="#880088" stroke-width="2.2"/><polyline points="884.2,405.1 900.0,405.5 910.2,406.8" fill="none" stroke="#880088" stroke-width="2.2"/><polyline points="912.0,408.5 913.5,408.5" fill="none" stroke="#880088" stroke-width="2.2"/><polyline points="913.0,411.3 914.5,411.3" fill="none" stroke="#880088" stroke-width="2.2"/><polyline points="914.5,417.3 920.0,418.0 925.0,418.9 928.0,417.8 931.0,418.8 934.0,420.0" fill="none" stroke="#880088" stroke-width="2.2"/><polyline points="936.0,422.5 939.0,422.5" fill="none" stroke="#880088" stroke-width="2.2"/><polyline points="941.0,423.5 947.5,424.3" fill="none" stroke="#880088" stroke-width="2.2"/><polyline points="948.4,468.2 965.0,468.6 980.0,469.5 983.0,470.3 985.3,469.6" fill="none" stroke="#880088" stroke-width="2.2"/><polyline points="987.0,476.0 1000.0,476.2 1021.1,477.0" fill="none" stroke="#880088" stroke-width="2.2"/><polyline points="1022.8,479.4 1040.0,480.8 1060.4,482.9" fill="none" stroke="#880088" stroke-width="2.2"/><polyline points="1063.8,485.6 1084.2,486.7" fill="none" stroke="#880088" stroke-width="2.2"/><polyline points="1086.0,488.3 1111.5,489.4 1115.0,490.8 1132.0,492.5 1134.0,493.8 1149.0,494.5" fill="none" stroke="#880088" stroke-width="2.2"/><polyline points="1151.0,497.0 1169.5,497.6 1171.0,499.0 1186.6,500.0" fill="none" stroke="#880088" stroke-width="2.2"/><polyline points="1190.0,502.6 1191.5,502.6" fill="none" stroke="#880088" stroke-width="2.2"/><polyline points="1192.0,505.5 1195.1,506.8 1208.8,508.8 1241.2,509.5 1250.0,510.3 1258.2,511.2 1262.0,510.5 1275.3,509.8 1300.0,509.2 1330.0,508.8 1335.0,509.4 1340.0,508.6 1349.0,509.0" fill="none" stroke="#880088" stroke-width="2.2"/><g fill="#000"><rect x="606.6" y="683.0" width="1.500" height="1.500"/><rect x="621.4" y="683.0" width="1.500" height="1.500"/><rect x="631.3" y="683.0" width="1.500" height="1.500"/><rect x="642.8" y="683.0" width="6.6" height="2"/><rect x="715.3" y="679.0" width="4.7" height="2"/><rect x="719.0" y="678.0" width="6.2" height="2"/><rect x="750.0" y="675.0" width="1.500" height="1.500"/><rect x="752.0" y="675.0" width="4.0" height="2"/><rect x="759.0" y="674.5" width="1.500" height="1.500"/><rect x="761.0" y="674.0" width="5.3" height="2"/><rect x="786.0" y="671.0" width="7.6" height="2"/><rect x="793.6" y="668.0" width="6.4" height="2"/><rect x="801.0" y="666.0" width="8.9" height="2"/><rect x="809.9" y="663.0" width="6.2" height="2"/><rect x="816.1" y="661.0" width="7.2" height="2"/><rect x="823.3" y="657.0" width="2.7" height="2"/><rect x="826.5" y="654.1" width="1.500" height="1.500"/><rect x="826.9" y="653.9" width="1.500" height="1.500"/><rect x="827.8" y="652.6" width="1.500" height="1.500"/><rect x="829.1" y="651.8" width="1.500" height="1.500"/><rect x="829.8" y="652.8" width="1.500" height="1.500"/><rect x="830.8" y="652.5" width="1.500" height="1.500"/><rect x="831.8" y="650.8" width="1.500" height="1.500"/><rect x="832.5" y="650.8" width="1.500" height="1.500"/><rect x="833.0" y="652.2" width="1.500" height="1.500"/><rect x="834.3" y="651.5" width="1.500" height="1.500"/><rect x="835.1" y="651.0" width="1.500" height="1.500"/><rect x="836.2" y="650.4" width="1.500" height="1.500"/><rect x="837.2" y="649.8" width="1.500" height="1.500"/><rect x="837.4" y="649.1" width="1.500" height="1.500"/><rect x="838.8" y="648.4" width="1.500" height="1.500"/><rect x="839.2" y="649.5" width="1.500" height="1.500"/><rect x="840.1" y="649.0" width="1.500" height="1.500"/><rect x="841.2" y="647.5" width="1.500" height="1.500"/><rect x="842.0" y="647.5" width="1.500" height="1.500"/><rect x="842.7" y="649.6" width="1.500" height="1.500"/><rect x="843.6" y="649.4" width="1.500" height="1.500"/><rect x="844.2" y="647.9" width="1.500" height="1.500"/><rect x="846.0" y="670.0" width="9.9" height="2"/><rect x="856.9" y="666.0" width="9.5" height="2"/><rect x="868.4" y="662.0" width="6.3" height="2"/><rect x="875.8" y="660.0" width="8.4" height="2"/><rect x="884.1" y="656.0" width="9.7" height="2"/><rect x="895.8" y="652.0" width="4.2" height="2"/><rect x="900.0" y="651.0" width="6.1" height="2"/><rect x="906.1" y="648.0" width="9.1" height="2"/><rect x="915.2" y="644.0" width="9.8" height="2"/><rect x="925.0" y="641.0" width="8.0" height="2"/><rect x="935.0" y="636.0" width="6.4" height="2"/><rect x="942.4" y="634.0" width="10.4" height="2"/><rect x="953.8" y="629.0" width="9.5" height="2"/><rect x="965.3" y="623.0" width="10.8" height="2"/><rect x="976.1" y="619.0" width="6.8" height="2"/><rect x="982.9" y="616.0" width="8.4" height="2"/><rect x="992.3" y="611.0" width="7.4" height="2"/><rect x="1000.7" y="608.0" width="9.0" height="2"/><rect x="1009.8" y="605.0" width="9.5" height="2"/><rect x="1019.2" y="601.0" width="8.3" height="2"/><rect x="1029.5" y="596.0" width="8.0" height="2"/><rect x="1039.5" y="591.0" width="9.2" height="2"/><rect x="1048.7" y="588.0" width="10.9" height="2"/><rect x="1059.6" y="583.0" width="2.1" height="2"/><rect x="1062.5" y="601.9" width="1.500" height="1.500"/><rect x="1063.7" y="599.1" width="1.500" height="1.500"/><rect x="1063.8" y="597.2" width="1.500" height="1.500"/><rect x="1065.0" y="595.9" width="1.500" height="1.500"/><rect x="1066.3" y="592.3" width="1.500" height="1.500"/><rect x="1066.8" y="589.1" width="1.500" height="1.500"/><rect x="1067.7" y="590.3" width="1.500" height="1.500"/><rect x="1068.5" y="585.4" width="1.500" height="1.500"/><rect x="1066.0" y="614.0" width="1.500" height="1.500"/><rect x="1073.1" y="662.5" width="1.500" height="1.500"/><rect x="1074.7" y="661.7" width="1.500" height="1.500"/><rect x="1075.7" y="661.6" width="1.500" height="1.500"/><rect x="1076.2" y="662.4" width="1.500" height="1.500"/><rect x="1077.4" y="661.7" width="1.500" height="1.500"/><rect x="1078.9" y="661.5" width="1.500" height="1.500"/><rect x="1118.0" y="636.5" width="1.500" height="1.500"/><rect x="1105.3" y="591.4" width="1.500" height="1.500"/><rect x="1106.3" y="593.3" width="1.500" height="1.500"/><rect x="1107.9" y="593.3" width="1.500" height="1.500"/><rect x="1108.9" y="585.4" width="1.500" height="1.500"/><rect x="1110.2" y="587.9" width="1.500" height="1.500"/><rect x="1111.5" y="588.6" width="1.500" height="1.500"/><rect x="1112.8" y="589.7" width="1.500" height="1.500"/><rect x="1113.3" y="583.8" width="1.500" height="1.500"/><rect x="1114.7" y="589.5" width="1.500" height="1.500"/><rect x="1115.6" y="585.7" width="1.500" height="1.500"/><rect x="1117.4" y="590.4" width="1.500" height="1.500"/><rect x="1118.6" y="584.3" width="1.500" height="1.500"/><rect x="1119.0" y="585.5" width="1.500" height="1.500"/><rect x="1120.4" y="587.2" width="1.500" height="1.500"/><rect x="1122.0" y="581.6" width="1.500" height="1.500"/><rect x="1123.4" y="578.0" width="1.500" height="1.500"/><rect x="1123.5" y="582.2" width="1.500" height="1.500"/><rect x="1125.0" y="581.8" width="1.500" height="1.500"/><rect x="1126.9" y="582.5" width="1.500" height="1.500"/><rect x="1126.9" y="585.7" width="1.500" height="1.500"/><rect x="1128.4" y="582.2" width="1.500" height="1.500"/><rect x="1130.1" y="575.8" width="1.500" height="1.500"/><rect x="1130.8" y="582.0" width="1.500" height="1.500"/><rect x="1131.7" y="583.6" width="1.500" height="1.500"/><rect x="1133.1" y="580.2" width="1.500" height="1.500"/><rect x="1133.9" y="583.3" width="1.500" height="1.500"/><rect x="1135.8" y="577.3" width="1.500" height="1.500"/><rect x="1136.9" y="572.6" width="1.500" height="1.500"/><rect x="1137.4" y="582.4" width="1.500" height="1.500"/><rect x="1138.4" y="577.6" width="1.500" height="1.500"/><rect x="1140.1" y="577.7" width="1.500" height="1.500"/><rect x="1141.4" y="576.5" width="1.500" height="1.500"/><rect x="1142.4" y="579.8" width="1.500" height="1.500"/><rect x="1143.2" y="575.3" width="1.500" height="1.500"/><rect x="1144.2" y="577.6" width="1.500" height="1.500"/><rect x="1146.1" y="569.2" width="1.500" height="1.500"/><rect x="1147.3" y="569.1" width="1.500" height="1.500"/><rect x="1148.7" y="569.1" width="1.500" height="1.500"/><rect x="1149.8" y="566.9" width="1.500" height="1.500"/><rect x="1150.1" y="571.9" width="1.500" height="1.500"/><rect x="1151.9" y="569.3" width="1.500" height="1.500"/><rect x="1152.8" y="574.5" width="1.500" height="1.500"/><rect x="1153.4" y="573.3" width="1.500" height="1.500"/><rect x="1155.5" y="571.6" width="1.500" height="1.500"/><rect x="1156.6" y="569.5" width="1.500" height="1.500"/><rect x="1157.8" y="573.0" width="1.500" height="1.500"/><rect x="1158.1" y="564.9" width="1.500" height="1.500"/><rect x="1159.7" y="572.2" width="1.500" height="1.500"/><rect x="1161.2" y="568.7" width="1.500" height="1.500"/><rect x="1162.3" y="563.2" width="1.500" height="1.500"/><rect x="1162.7" y="568.2" width="1.500" height="1.500"/><rect x="1163.9" y="561.6" width="1.500" height="1.500"/><rect x="1165.7" y="566.1" width="1.500" height="1.500"/><rect x="1166.6" y="568.4" width="1.500" height="1.500"/><rect x="1168.2" y="559.8" width="1.500" height="1.500"/><rect x="1168.5" y="559.5" width="1.500" height="1.500"/><rect x="1169.6" y="563.6" width="1.500" height="1.500"/><rect x="1170.7" y="568.1" width="1.500" height="1.500"/><rect x="1171.8" y="561.3" width="1.500" height="1.500"/><rect x="1174.0" y="563.5" width="1.500" height="1.500"/><rect x="1174.3" y="559.8" width="1.500" height="1.500"/><rect x="1175.8" y="565.0" width="1.500" height="1.500"/><rect x="1177.0" y="558.4" width="1.500" height="1.500"/><rect x="1178.1" y="564.9" width="1.500" height="1.500"/><rect x="1179.8" y="564.7" width="1.500" height="1.500"/><rect x="1180.9" y="556.4" width="1.500" height="1.500"/><rect x="1181.5" y="558.5" width="1.500" height="1.500"/><rect x="1182.6" y="556.9" width="1.500" height="1.500"/><rect x="1184.1" y="557.6" width="1.500" height="1.500"/><rect x="1184.7" y="555.9" width="1.500" height="1.500"/><rect x="1185.7" y="560.7" width="1.500" height="1.500"/><rect x="1187.8" y="558.4" width="1.500" height="1.500"/><rect x="1188.3" y="553.9" width="1.500" height="1.500"/><rect x="1189.2" y="555.9" width="1.500" height="1.500"/><rect x="1191.1" y="551.1" width="1.500" height="1.500"/><rect x="1192.4" y="551.3" width="1.500" height="1.500"/><rect x="1193.3" y="551.6" width="1.500" height="1.500"/><rect x="1194.5" y="559.6" width="1.500" height="1.500"/><rect x="1195.3" y="553.0" width="1.500" height="1.500"/><rect x="1196.4" y="548.9" width="1.500" height="1.500"/><rect x="1197.5" y="551.2" width="1.500" height="1.500"/><rect x="1198.8" y="554.7" width="1.500" height="1.500"/><rect x="1199.8" y="552.2" width="1.500" height="1.500"/><rect x="1200.9" y="556.7" width="1.500" height="1.500"/><rect x="1201.8" y="555.8" width="1.500" height="1.500"/><rect x="1203.1" y="554.9" width="1.500" height="1.500"/><rect x="1204.1" y="547.8" width="1.500" height="1.500"/><rect x="1206.2" y="546.0" width="1.500" height="1.500"/><rect x="1207.2" y="552.6" width="1.500" height="1.500"/><rect x="1208.4" y="550.5" width="1.500" height="1.500"/><rect x="1209.7" y="547.1" width="1.500" height="1.500"/><rect x="1210.4" y="548.0" width="1.500" height="1.500"/><rect x="1211.5" y="545.5" width="1.500" height="1.500"/><rect x="1212.4" y="550.3" width="1.500" height="1.500"/><rect x="1213.4" y="550.9" width="1.500" height="1.500"/><rect x="1214.7" y="540.8" width="1.500" height="1.500"/><rect x="1215.6" y="543.1" width="1.500" height="1.500"/><rect x="1217.4" y="542.0" width="1.500" height="1.500"/><rect x="1218.1" y="540.6" width="1.500" height="1.500"/><rect x="1219.0" y="549.8" width="1.500" height="1.500"/><rect x="1220.6" y="548.3" width="1.500" height="1.500"/><rect x="1222.0" y="538.1" width="1.500" height="1.500"/><rect x="1223.2" y="547.5" width="1.500" height="1.500"/><rect x="1224.7" y="539.5" width="1.500" height="1.500"/><rect x="1224.9" y="546.7" width="1.500" height="1.500"/><rect x="1226.6" y="541.7" width="1.500" height="1.500"/><rect x="1227.3" y="540.5" width="1.500" height="1.500"/><rect x="1229.0" y="537.9" width="1.500" height="1.500"/><rect x="1230.3" y="545.3" width="1.500" height="1.500"/><rect x="1230.5" y="534.5" width="1.500" height="1.500"/><rect x="1232.2" y="544.3" width="1.500" height="1.500"/><rect x="1233.4" y="535.8" width="1.500" height="1.500"/><rect x="1234.5" y="539.9" width="1.500" height="1.500"/><rect x="1235.8" y="539.3" width="1.500" height="1.500"/><rect x="1236.9" y="541.5" width="1.500" height="1.500"/><rect x="1087.2" y="595.8" width="1.500" height="1.500"/><rect x="1087.8" y="595.0" width="1.500" height="1.500"/><rect x="1090.0" y="598.7" width="1.500" height="1.500"/><rect x="1093.5" y="592.1" width="1.500" height="1.500"/><rect x="1096.3" y="596.8" width="1.500" height="1.500"/><rect x="1098.3" y="589.3" width="1.500" height="1.500"/><rect x="1100.1" y="594.6" width="1.500" height="1.500"/><rect x="1101.9" y="588.1" width="1.500" height="1.500"/><rect x="1104.7" y="589.3" width="1.500" height="1.500"/><rect x="1106.6" y="592.7" width="1.500" height="1.500"/><rect x="1109.1" y="589.7" width="1.500" height="1.500"/><rect x="1110.1" y="585.8" width="1.500" height="1.500"/><rect x="1112.9" y="583.4" width="1.500" height="1.500"/><rect x="1115.4" y="584.7" width="1.500" height="1.500"/><rect x="1119.1" y="583.1" width="1.500" height="1.500"/><rect x="1119.2" y="587.0" width="1.500" height="1.500"/><rect x="1121.9" y="581.0" width="1.500" height="1.500"/><rect x="1124.4" y="579.3" width="1.500" height="1.500"/><rect x="1126.5" y="582.5" width="1.500" height="1.500"/><rect x="1128.7" y="582.4" width="1.500" height="1.500"/><rect x="1130.7" y="582.0" width="1.500" height="1.500"/><rect x="1133.1" y="579.4" width="1.500" height="1.500"/><rect x="1082.0" y="599.0" width="3.6" height="2"/><rect x="1085.6" y="599.0" width="2.3" height="2"/><rect x="1087.9" y="597.0" width="4.6" height="2"/><rect x="1094.5" y="595.0" width="5.1" height="2"/><rect x="1101.6" y="592.0" width="2.6" height="2"/><rect x="1104.2" y="592.0" width="2.2" height="2"/><rect x="1108.4" y="590.0" width="3.6" height="2"/><rect x="1239.0" y="534.0" width="9.0" height="2"/><rect x="1250.4" y="519.8" width="1.500" height="1.500"/><rect x="1250.9" y="519.4" width="1.500" height="1.500"/><rect x="1251.3" y="518.9" width="1.500" height="1.500"/><rect x="1252.7" y="517.6" width="1.500" height="1.500"/><rect x="1253.6" y="516.6" width="1.500" height="1.500"/><rect x="1253.7" y="515.3" width="1.500" height="1.500"/><rect x="1254.9" y="515.9" width="1.500" height="1.500"/><rect x="1255.5" y="514.4" width="1.500" height="1.500"/><rect x="1254.0" y="513.0" width="7.0" height="2"/><rect x="1262.0" y="504.5" width="13.0" height="2"/><rect x="1274.0" y="503.0" width="14.4" height="2"/><rect x="1288.1" y="500.5" width="1.500" height="1.500"/><rect x="1289.9" y="499.7" width="1.500" height="1.500"/><rect x="1290.8" y="499.6" width="1.500" height="1.500"/><rect x="1291.8" y="500.2" width="1.500" height="1.500"/><rect x="1294.1" y="495.9" width="1.500" height="1.500"/><rect x="1294.9" y="497.2" width="1.500" height="1.500"/><rect x="1296.1" y="496.5" width="1.500" height="1.500"/><rect x="1297.8" y="493.4" width="1.500" height="1.500"/><rect x="1302.9" y="486.3" width="1.500" height="1.500"/><rect x="1304.1" y="486.5" width="1.500" height="1.500"/><rect x="1305.6" y="485.4" width="1.500" height="1.500"/><rect x="1306.9" y="485.6" width="1.500" height="1.500"/><rect x="1307.1" y="486.3" width="1.500" height="1.500"/><rect x="1308.5" y="485.9" width="1.500" height="1.500"/><rect x="1309.9" y="485.7" width="1.500" height="1.500"/><rect x="1311.6" y="485.3" width="1.500" height="1.500"/><rect x="1312.0" y="483.5" width="13.0" height="2"/><rect x="1324.0" y="479.5" width="6.0" height="2"/><rect x="1329.0" y="478.0" width="4.0" height="2"/><rect x="1328.0" y="550.5" width="1.500" height="1.500"/><rect x="1331.0" y="550.5" width="1.500" height="1.500"/><rect x="1299.5" y="565.5" width="3.5" height="2"/><rect x="1290.0" y="581.0" width="1.500" height="1.500"/><rect x="1293.0" y="581.0" width="1.500" height="1.500"/><rect x="1296.0" y="580.5" width="1.500" height="1.500"/><rect x="1298.5" y="580.5" width="1.500" height="1.500"/><rect x="1336.0" y="710.0" width="4.0" height="1"/><rect x="1342.0" y="710.0" width="4.0" height="1"/><rect x="1347.5" y="710.0" width="2.5" height="1"/></g></svg>
<div class="abs" id="sb" style="left:467px;top:713px;width:884px;height:15px;background:#eeeeee;border-top:1px solid #7a8a99"></div>
<div class="abs" style="left:467px;top:713px;width:16px;height:15px;border:1px solid #7a8a99;border-left:none;border-bottom:none;background:linear-gradient(#f8f8f8,#e4e4e4)"><svg width="15" height="15" viewBox="0 0 15 15" style="position:absolute;left:0;top:0"><path d="M4.500 7l4-4v8z" fill="#222"/></svg></div>
<div class="abs" style="left:1336px;top:713px;width:15px;height:15px;border:1px solid #7a8a99;border-right:none;border-bottom:none;background:linear-gradient(#f8f8f8,#e4e4e4)"><svg width="15" height="15" viewBox="0 0 15 15" style="position:absolute;left:0;top:0"><path d="M9.500 7l-4-4v8z" fill="#222"/></svg></div>
<div class="abs" id="thumb" style="left:961px;top:713px;width:375px;height:16px;border:1px solid #6382bf;background:linear-gradient(#dde8f3 0%,#ffffff 30%,#dde8f3 60%,#b8cfe5 100%);box-shadow:inset 1px 1px 0 rgba(255,255,255,.9)"><div style="position:absolute;left:184px;top:3px;width:1px;height:8px;background:#6382bf;box-shadow:2px 0 0 #6382bf,4px 0 0 #6382bf"></div></div>

<svg class="abs" style="left:650px;top:553px" width="18" height="26" viewBox="0 0 18 26"><path transform="translate(2.5 2.7) scale(.94) translate(-2.5 -2.7)" d="M2.500 2.700V20.600L6.500 17l2.200 4.900c.4.800 1.200.9 1.800.6.700-.3.900-1 .6-1.700L9 16.100l5.200-.6z" fill="#fff" stroke="#0a0a0a" stroke-width="1.200" stroke-linejoin="miter"/></svg>

</body>
</html>
